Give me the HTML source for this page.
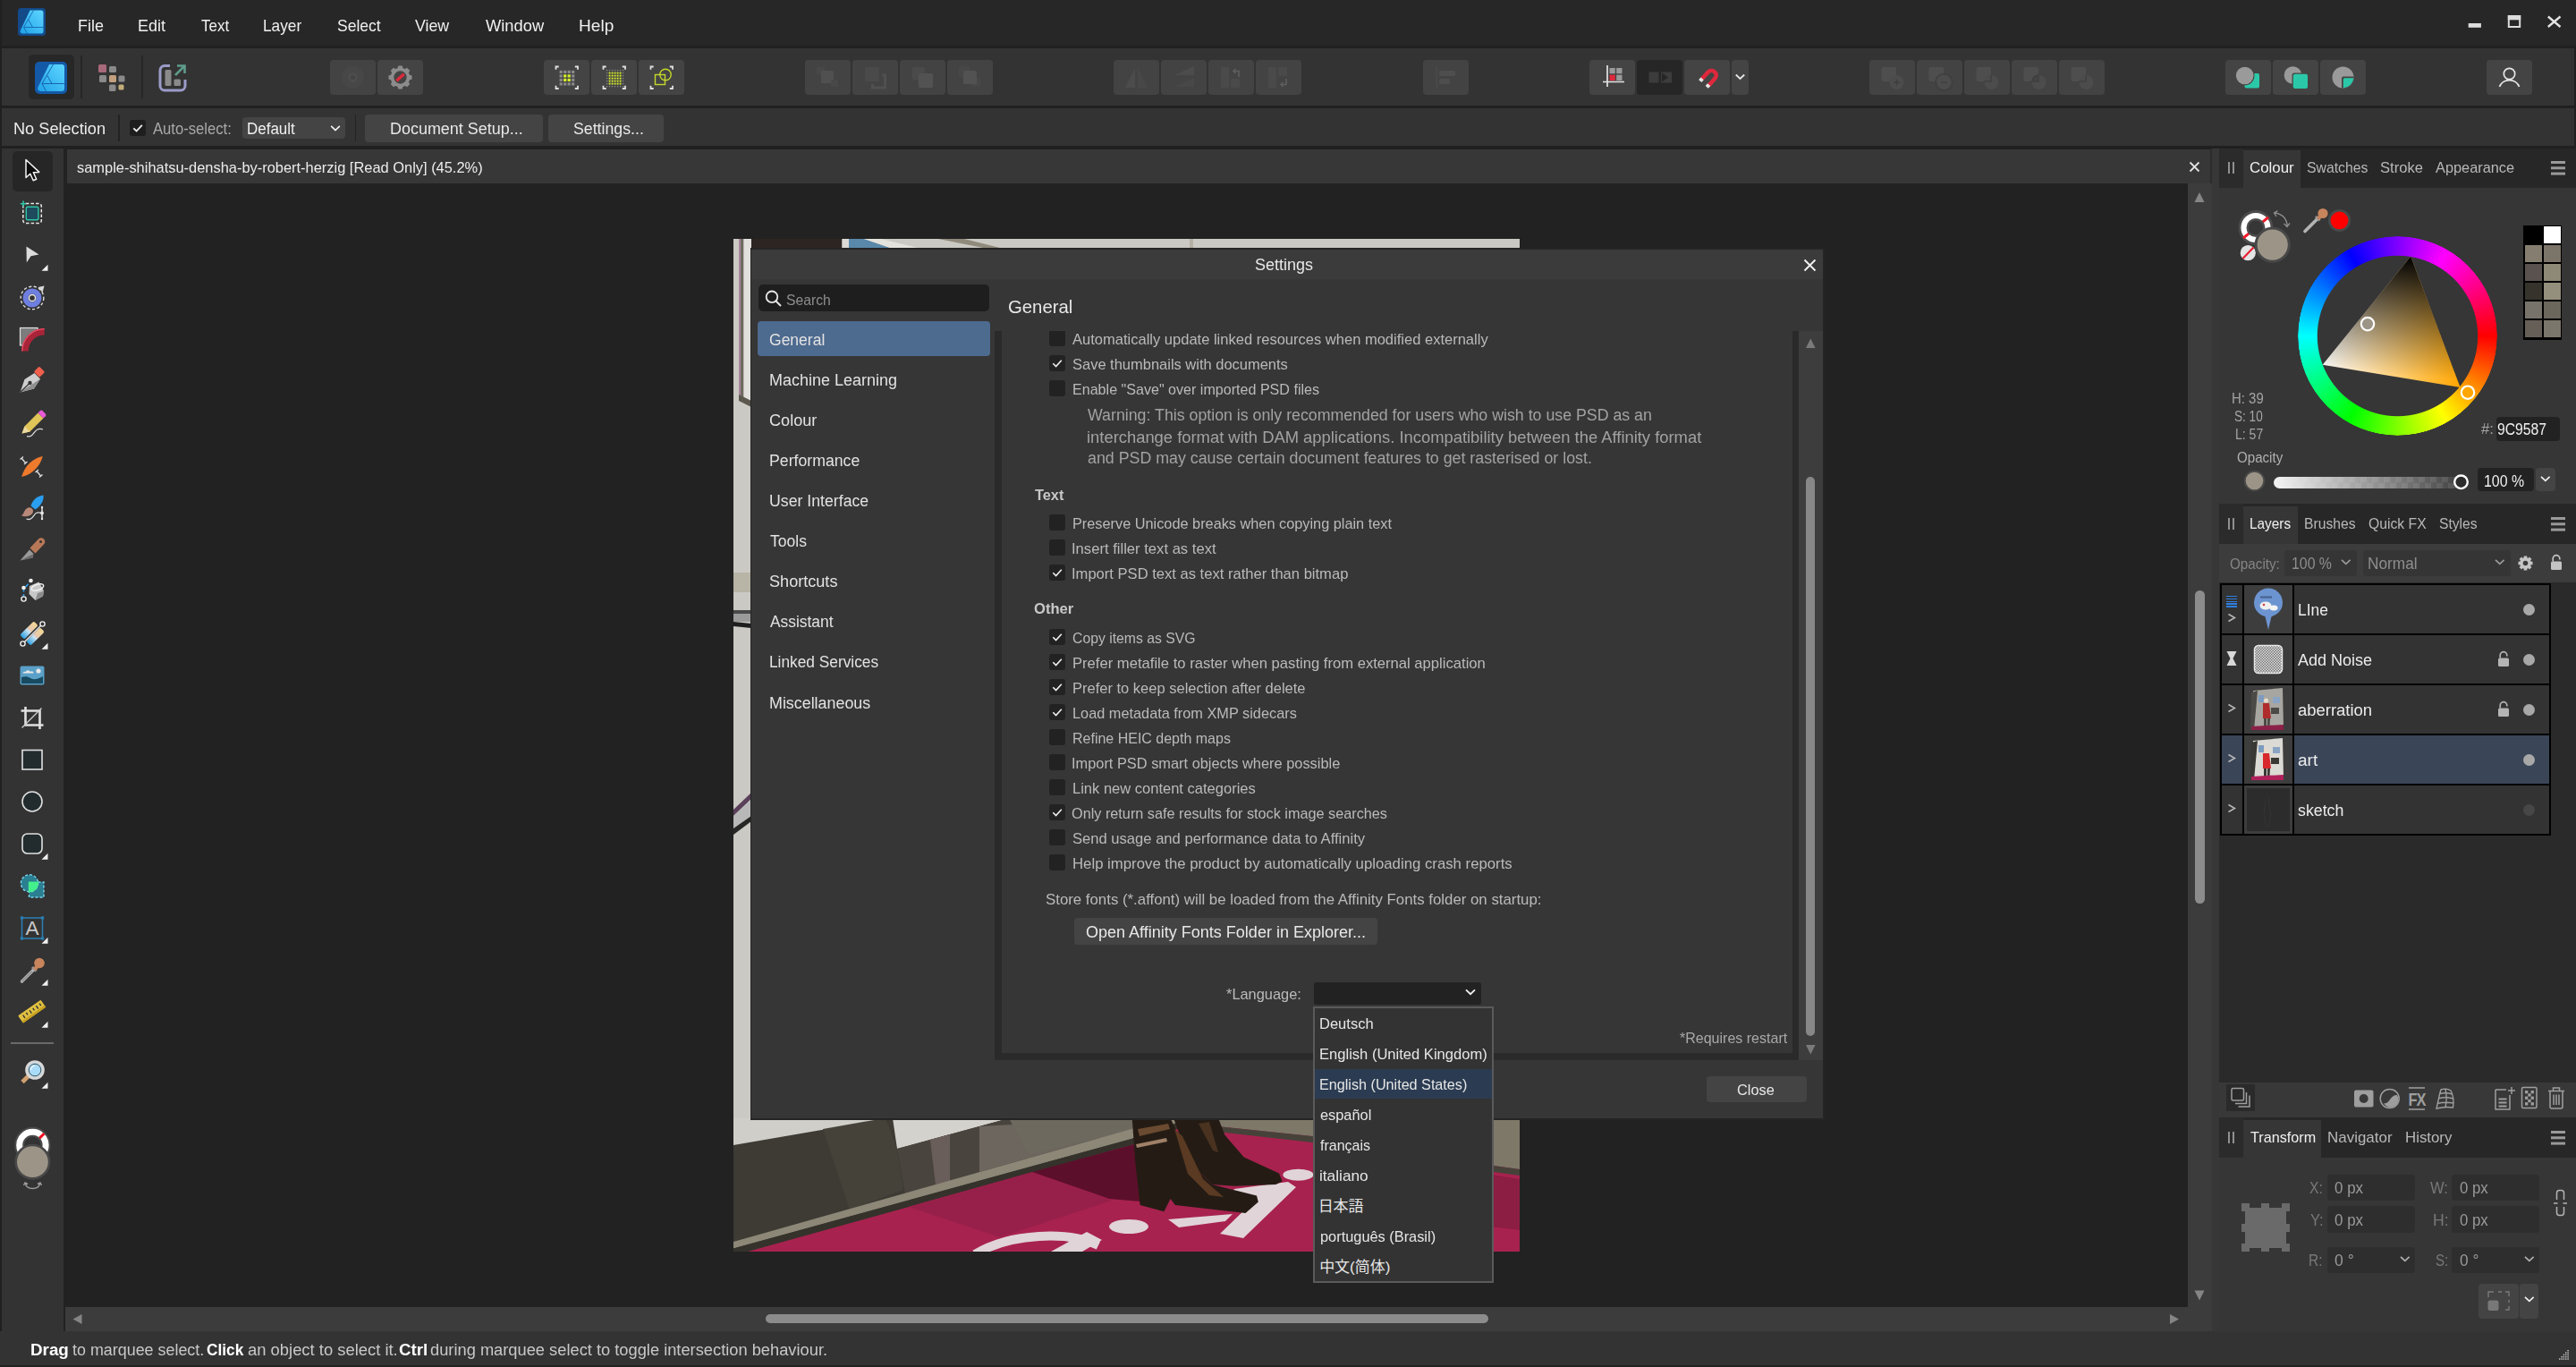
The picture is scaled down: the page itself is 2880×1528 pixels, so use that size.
<!DOCTYPE html>
<html lang="en"><head><meta charset="utf-8"><title>Affinity Designer - Settings</title>
<style>
html,body{margin:0;padding:0;background:#222;}
body{width:2880px;height:1528px;position:relative;overflow:hidden;font-family:"Liberation Sans","Noto Sans CJK JP",sans-serif;}
div,svg,span.t{position:absolute;}
span.t{white-space:nowrap;line-height:1;transform-origin:0 0;}
svg{overflow:visible;}
</style></head><body>
<div style="left:0px;top:0px;width:2880px;height:1528px;background:#202020;"></div>
<div style="left:2px;top:0px;width:2878px;height:51px;background:#272727;"></div>
<div style="left:2px;top:53.5px;width:2878px;height:64.5px;background:#333333;"></div>
<div style="left:2px;top:121px;width:2878px;height:41.5px;background:#333333;"></div>
<div style="left:2px;top:165.5px;width:69px;height:1323.5px;background:#333333;"></div>
<div style="left:73px;top:205px;width:2373px;height:1256px;background:#222222;"></div>
<div style="left:71px;top:165.5px;width:4px;height:1323.5px;background:#222222;"></div>
<div style="left:75px;top:167px;width:2396px;height:38px;background:#373737;"></div>
<div style="left:2446px;top:205px;width:27px;height:1283px;background:#3c3c3c;"></div>
<div style="left:73px;top:1461px;width:2373px;height:27px;background:#3c3c3c;"></div>
<div style="left:2471px;top:165.5px;width:2.4px;height:39.5px;background:#2c2c2c;"></div>
<div style="left:2473.4px;top:165.5px;width:7.6px;height:1322.5px;background:#373737;"></div>
<div style="left:0px;top:1488px;width:2880px;height:40px;background:#333333;"></div>
<div style="left:2878px;top:51px;width:2px;height:1437px;background:#202020;"></div>
<svg style="left:20px;top:9px;" width="31" height="31" viewBox="0 0 31 31"><defs><linearGradient id="lg1" x1="0" y1="1" x2="1" y2="0"><stop offset="0" stop-color="#1fa2e8"/><stop offset="1" stop-color="#5fd6ff"/></linearGradient></defs>
<rect x="0" y="0" width="31" height="31" rx="3.5" fill="#134a8a"/>
<path d="M13.5 2.5 H26 a2.5 2.5 0 0 1 2.5 2.5 V26 a2.5 2.5 0 0 1 -2.5 2.5 H5 a2.5 2.5 0 0 1 -2.2 -3.6 Z" fill="url(#lg1)"/>
<path d="M17.5 2.5 L6.5 21.5 H28.5 M11.5 12.8 L16.5 21.5 M6.5 21.5 L10.5 28.5" stroke="#1565b0" stroke-width="0.9" fill="none"/></svg>
<span class="t" id="t0" style="left:86.70px;top:19.42px;font-size:19px;color:#f0f0f0;transform:scaleX(0.9457);">File</span>
<span class="t" id="t1" style="left:153.58px;top:19.42px;font-size:19px;color:#f0f0f0;transform:scaleX(0.9449);">Edit</span>
<span class="t" id="t2" style="left:224.92px;top:19.42px;font-size:19px;color:#f0f0f0;transform:scaleX(0.8939);">Text</span>
<span class="t" id="t3" style="left:294.22px;top:19.42px;font-size:19px;color:#f0f0f0;transform:scaleX(0.9086);">Layer</span>
<span class="t" id="t4" style="left:376.52px;top:19.42px;font-size:19px;color:#f0f0f0;transform:scaleX(0.9223);">Select</span>
<span class="t" id="t5" style="left:464.46px;top:19.42px;font-size:19px;color:#f0f0f0;transform:scaleX(0.9338);">View</span>
<span class="t" id="t6" style="left:542.56px;top:19.42px;font-size:19px;color:#f0f0f0;transform:scaleX(0.9640);">Window</span>
<span class="t" id="t7" style="left:647.43px;top:19.42px;font-size:19px;color:#f0f0f0;transform:scaleX(1.0048);">Help</span>
<svg style="left:2758px;top:16px;" width="120" height="20" viewBox="0 0 120 20"><rect x="1.700" y="10" width="14.200" height="4.800" fill="#dcdcdc"/>
<rect x="46.800" y="2" width="12.400" height="12" fill="none" stroke="#dcdcdc" stroke-width="2"/><rect x="45.800" y="1" width="14.400" height="5.300" fill="#dcdcdc"/>
<path d="M90.800 2.500 L104.500 14 M104.500 2.500 L90.800 14" stroke="#e4e4e4" stroke-width="2.300"/></svg>
<div style="left:32px;top:61px;width:51px;height:50px;background:#272727;border-radius:5px;"></div>
<svg style="left:39px;top:69px;" width="36" height="36" viewBox="0 0 36 36"><rect x="0" y="0" width="36" height="36" rx="5" fill="#1459a8"/>
<path d="M16 3 H30 a3 3 0 0 1 3 3 V30 a3 3 0 0 1 -3 3 H6 a3 3 0 0 1 -2.6 -4.4 Z" fill="url(#lg1)"/>
<path d="M20.5 3 L8 24.5 H33 M13.5 15 L19 24.5 M8 24.5 L12.5 33" stroke="#1565b0" stroke-width="1" fill="none"/></svg>
<div style="left:90px;top:62px;width:1.5px;height:48px;background:#262626;"></div>
<div style="left:158px;top:62px;width:1.5px;height:48px;background:#262626;"></div>
<svg style="left:109px;top:71px;" width="32" height="32" viewBox="0 0 32 32"><rect x="1" y="1" width="9" height="9" rx="1.5" fill="#a8697a"/><rect x="13" y="3" width="8" height="7" rx="1.5" fill="#8a8a8a"/>
<rect x="2" y="13" width="8" height="8" rx="1.5" fill="#8a8a8a"/><rect x="13" y="13" width="8" height="8" rx="1.5" fill="#c29f7e"/><rect x="23.5" y="13.5" width="7" height="7" rx="1.5" fill="#8a8a8a"/>
<rect x="13" y="23.5" width="7.5" height="7.5" rx="1.5" fill="#8a8a8a"/><rect x="23.5" y="23.5" width="6" height="6" rx="1.5" fill="#c2ad7a"/></svg>
<svg style="left:177px;top:71px;" width="32" height="32" viewBox="0 0 32 32"><path d="M13 2.5 H7 a5 5 0 0 0 -5 5 V25 a5 5 0 0 0 5 5 H25 a5 5 0 0 0 5 -5 V18" fill="none" stroke="#9b9bc8" stroke-width="3"/>
<rect x="7.5" y="7" width="7" height="18" rx="1.5" fill="#8a8a8a"/><rect x="17.5" y="17.5" width="7.5" height="7.500" rx="1.5" fill="#8a8a8a"/>
<path d="M19 13 L29 3 M21 2.500 H29.5 V11" fill="none" stroke="#5f9b8a" stroke-width="2.6"/></svg>
<div style="left:369px;top:67px;width:51px;height:39px;background:#434343;border-radius:4px;"></div>
<div style="left:422px;top:67px;width:51px;height:39px;background:#444444;border-radius:4px;"></div>
<div style="left:608px;top:67px;width:51px;height:39px;background:#444444;border-radius:4px;"></div>
<div style="left:661px;top:67px;width:51px;height:39px;background:#444444;border-radius:4px;"></div>
<div style="left:714px;top:67px;width:51px;height:39px;background:#444444;border-radius:4px;"></div>
<div style="left:900px;top:67px;width:51px;height:39px;background:#434343;border-radius:4px;"></div>
<div style="left:953px;top:67px;width:51px;height:39px;background:#434343;border-radius:4px;"></div>
<div style="left:1006px;top:67px;width:51px;height:39px;background:#434343;border-radius:4px;"></div>
<div style="left:1059px;top:67px;width:51px;height:39px;background:#434343;border-radius:4px;"></div>
<div style="left:1245px;top:67px;width:51px;height:39px;background:#434343;border-radius:4px;"></div>
<div style="left:1298px;top:67px;width:51px;height:39px;background:#434343;border-radius:4px;"></div>
<div style="left:1351px;top:67px;width:51px;height:39px;background:#434343;border-radius:4px;"></div>
<div style="left:1404px;top:67px;width:51px;height:39px;background:#434343;border-radius:4px;"></div>
<div style="left:1591px;top:67px;width:51px;height:39px;background:#434343;border-radius:4px;"></div>
<div style="left:1777px;top:67px;width:51px;height:39px;background:#444444;border-radius:4px;"></div>
<div style="left:1830px;top:67px;width:51px;height:39px;background:#262626;border-radius:4px;"></div>
<div style="left:1883px;top:67px;width:51px;height:39px;background:#444444;border-radius:4px;"></div>
<div style="left:1936px;top:67px;width:19px;height:39px;background:#444444;border-radius:4px;"></div>
<div style="left:2090px;top:67px;width:51px;height:39px;background:#434343;border-radius:4px;"></div>
<div style="left:2143px;top:67px;width:51px;height:39px;background:#434343;border-radius:4px;"></div>
<div style="left:2196px;top:67px;width:51px;height:39px;background:#434343;border-radius:4px;"></div>
<div style="left:2249px;top:67px;width:51px;height:39px;background:#434343;border-radius:4px;"></div>
<div style="left:2302px;top:67px;width:51px;height:39px;background:#434343;border-radius:4px;"></div>
<div style="left:2488px;top:67px;width:51px;height:39px;background:#444444;border-radius:4px;"></div>
<div style="left:2541px;top:67px;width:51px;height:39px;background:#444444;border-radius:4px;"></div>
<div style="left:2594px;top:67px;width:51px;height:39px;background:#444444;border-radius:4px;"></div>
<div style="left:2780px;top:67px;width:51px;height:39px;background:#444444;border-radius:4px;"></div>
<svg style="left:369px;top:67px;" width="51" height="39" viewBox="0 0 51 39"><circle cx="25.5" cy="19.5" r="9" fill="none" stroke="#474747" stroke-width="7"/><circle cx="25.5" cy="19.5" r="4" fill="none" stroke="#4d4d4d" stroke-width="3"/></svg>
<svg style="left:422px;top:67px;" width="51" height="39" viewBox="0 0 51 39"><rect x="22.9" y="6.5" width="5.2" height="4.2" rx="1" fill="#8c8c8c" transform="rotate(0 25.5 19.5)"/><rect x="22.9" y="6.5" width="5.2" height="4.2" rx="1" fill="#8c8c8c" transform="rotate(45 25.5 19.5)"/><rect x="22.9" y="6.5" width="5.2" height="4.2" rx="1" fill="#8c8c8c" transform="rotate(90 25.5 19.5)"/><rect x="22.9" y="6.5" width="5.2" height="4.2" rx="1" fill="#8c8c8c" transform="rotate(135 25.5 19.5)"/><rect x="22.9" y="6.5" width="5.2" height="4.2" rx="1" fill="#8c8c8c" transform="rotate(180 25.5 19.5)"/><rect x="22.9" y="6.5" width="5.2" height="4.2" rx="1" fill="#8c8c8c" transform="rotate(225 25.5 19.5)"/><rect x="22.9" y="6.5" width="5.2" height="4.2" rx="1" fill="#8c8c8c" transform="rotate(270 25.5 19.5)"/><rect x="22.9" y="6.5" width="5.2" height="4.2" rx="1" fill="#8c8c8c" transform="rotate(315 25.5 19.5)"/><circle cx="25.5" cy="19.5" r="9" fill="none" stroke="#8c8c8c" stroke-width="3.6"/><path d="M21.3 23.200 L29.700 15.800" stroke="#e0283c" stroke-width="3.4"/></svg>
<svg style="left:608px;top:67px;" width="51" height="39" viewBox="0 0 51 39"><path d="M13.5 10.7 V7.5 H16.7 M34.8 7.5 H38 V10.7 M38 28.8 V32 H34.8 M16.7 32 H13.5 V28.8" fill="none" stroke="#e0e0e0" stroke-width="1.8"/><rect x="17.6" y="11.8" width="3.2" height="3.2" fill="#8a8a8a"/><rect x="17.6" y="16.3" width="3.2" height="3.2" fill="#8a8a8a"/><rect x="17.6" y="20.8" width="3.2" height="3.2" fill="#8a8a8a"/><rect x="17.6" y="25.3" width="3.2" height="3.2" fill="#8a8a8a"/><rect x="22.1" y="11.8" width="3.2" height="3.2" fill="#8a8a8a"/><rect x="22.1" y="16.3" width="3.2" height="3.2" fill="#d8f02a"/><rect x="22.1" y="20.8" width="3.2" height="3.2" fill="#d8f02a"/><rect x="22.1" y="25.3" width="3.2" height="3.2" fill="#8a8a8a"/><rect x="26.6" y="11.8" width="3.2" height="3.2" fill="#8a8a8a"/><rect x="26.6" y="16.3" width="3.2" height="3.2" fill="#d8f02a"/><rect x="26.6" y="20.8" width="3.2" height="3.2" fill="#d8f02a"/><rect x="26.6" y="25.3" width="3.2" height="3.2" fill="#8a8a8a"/><rect x="31.1" y="11.8" width="3.2" height="3.2" fill="#8a8a8a"/><rect x="31.1" y="16.3" width="3.2" height="3.2" fill="#8a8a8a"/><rect x="31.1" y="20.8" width="3.2" height="3.2" fill="#8a8a8a"/><rect x="31.1" y="25.3" width="3.2" height="3.2" fill="#8a8a8a"/></svg>
<svg style="left:661px;top:67px;" width="51" height="39" viewBox="0 0 51 39"><path d="M13.5 10.7 V7.5 H16.7 M34.8 7.5 H38 V10.7 M38 28.8 V32 H34.8 M16.7 32 H13.5 V28.8" fill="none" stroke="#e0e0e0" stroke-width="1.8"/><rect x="16.95" y="10.95" width="1.3" height="1.3" fill="#8a8a8a"/><rect x="16.95" y="13.95" width="1.3" height="1.3" fill="#8a8a8a"/><rect x="16.95" y="16.95" width="1.3" height="1.3" fill="#8a8a8a"/><rect x="16.95" y="19.95" width="1.3" height="1.3" fill="#8a8a8a"/><rect x="16.95" y="22.95" width="1.3" height="1.3" fill="#8a8a8a"/><rect x="16.95" y="25.95" width="1.3" height="1.3" fill="#8a8a8a"/><rect x="16.95" y="28.95" width="1.3" height="1.3" fill="#8a8a8a"/><rect x="19.95" y="10.95" width="1.3" height="1.3" fill="#8a8a8a"/><rect x="19.65" y="13.65" width="1.9" height="1.9" fill="#d8f02a"/><rect x="19.65" y="16.65" width="1.9" height="1.9" fill="#d8f02a"/><rect x="19.65" y="19.65" width="1.9" height="1.9" fill="#d8f02a"/><rect x="19.65" y="22.65" width="1.9" height="1.9" fill="#d8f02a"/><rect x="19.65" y="25.65" width="1.9" height="1.9" fill="#d8f02a"/><rect x="19.95" y="28.95" width="1.3" height="1.3" fill="#8a8a8a"/><rect x="22.95" y="10.95" width="1.3" height="1.3" fill="#8a8a8a"/><rect x="22.65" y="13.65" width="1.9" height="1.9" fill="#d8f02a"/><rect x="22.65" y="16.65" width="1.9" height="1.9" fill="#d8f02a"/><rect x="22.65" y="19.65" width="1.9" height="1.9" fill="#d8f02a"/><rect x="22.65" y="22.65" width="1.9" height="1.9" fill="#d8f02a"/><rect x="22.65" y="25.65" width="1.9" height="1.9" fill="#d8f02a"/><rect x="22.95" y="28.95" width="1.3" height="1.3" fill="#8a8a8a"/><rect x="25.95" y="10.95" width="1.3" height="1.3" fill="#8a8a8a"/><rect x="25.65" y="13.65" width="1.9" height="1.9" fill="#d8f02a"/><rect x="25.65" y="16.65" width="1.9" height="1.9" fill="#d8f02a"/><rect x="25.65" y="19.65" width="1.9" height="1.9" fill="#d8f02a"/><rect x="25.65" y="22.65" width="1.9" height="1.9" fill="#d8f02a"/><rect x="25.65" y="25.65" width="1.9" height="1.9" fill="#d8f02a"/><rect x="25.95" y="28.95" width="1.3" height="1.3" fill="#8a8a8a"/><rect x="28.95" y="10.95" width="1.3" height="1.3" fill="#8a8a8a"/><rect x="28.65" y="13.65" width="1.9" height="1.9" fill="#d8f02a"/><rect x="28.65" y="16.65" width="1.9" height="1.9" fill="#d8f02a"/><rect x="28.65" y="19.65" width="1.9" height="1.9" fill="#d8f02a"/><rect x="28.65" y="22.65" width="1.9" height="1.9" fill="#d8f02a"/><rect x="28.65" y="25.65" width="1.9" height="1.9" fill="#d8f02a"/><rect x="28.95" y="28.95" width="1.3" height="1.3" fill="#8a8a8a"/><rect x="31.95" y="10.95" width="1.3" height="1.3" fill="#8a8a8a"/><rect x="31.65" y="13.65" width="1.9" height="1.9" fill="#d8f02a"/><rect x="31.65" y="16.65" width="1.9" height="1.9" fill="#d8f02a"/><rect x="31.65" y="19.65" width="1.9" height="1.9" fill="#d8f02a"/><rect x="31.65" y="22.65" width="1.9" height="1.9" fill="#d8f02a"/><rect x="31.65" y="25.65" width="1.9" height="1.9" fill="#d8f02a"/><rect x="31.95" y="28.95" width="1.3" height="1.3" fill="#8a8a8a"/><rect x="34.95" y="10.95" width="1.3" height="1.3" fill="#8a8a8a"/><rect x="34.95" y="13.95" width="1.3" height="1.3" fill="#8a8a8a"/><rect x="34.95" y="16.95" width="1.3" height="1.3" fill="#8a8a8a"/><rect x="34.95" y="19.95" width="1.3" height="1.3" fill="#8a8a8a"/><rect x="34.95" y="22.95" width="1.3" height="1.3" fill="#8a8a8a"/><rect x="34.95" y="25.95" width="1.3" height="1.3" fill="#8a8a8a"/><rect x="34.95" y="28.95" width="1.3" height="1.3" fill="#8a8a8a"/></svg>
<svg style="left:714px;top:67px;" width="51" height="39" viewBox="0 0 51 39"><path d="M13.5 10.7 V7.5 H16.7 M34.8 7.5 H38 V10.7 M38 28.8 V32 H34.8 M16.7 32 H13.5 V28.8" fill="none" stroke="#e0e0e0" stroke-width="1.8"/><rect x="18.5" y="16.5" width="11" height="11" fill="none" stroke="#c4d82a" stroke-width="1.4"/><circle cx="30" cy="16.5" r="6.2" fill="none" stroke="#c4d82a" stroke-width="1.4"/></svg>
<svg style="left:900px;top:67px;" width="51" height="39" viewBox="0 0 51 39"><rect x="13" y="8" width="9" height="8" rx="1.5" fill="#484848"/><rect x="18" y="12" width="14" height="14" rx="1.5" fill="#505050"/><rect x="29" y="22" width="8" height="8" rx="1.5" fill="#484848"/></svg>
<svg style="left:953px;top:67px;" width="51" height="39" viewBox="0 0 51 39"><rect x="14" y="8" width="16" height="16" rx="1.5" fill="#4a4a4a"/><path d="M33 17 h3.500 v14 h-14 v-4" fill="none" stroke="#505050" stroke-width="3"/></svg>
<svg style="left:1006px;top:67px;" width="51" height="39" viewBox="0 0 51 39"><rect x="14" y="8" width="14" height="14" rx="1.5" fill="#4a4a4a"/><rect x="21" y="15" width="16" height="16" rx="1.5" fill="#525252"/></svg>
<svg style="left:1059px;top:67px;" width="51" height="39" viewBox="0 0 51 39"><rect x="13" y="7" width="12" height="12" rx="1.5" fill="#474747"/><rect x="27" y="20" width="10" height="10" rx="1.500" fill="#474747"/><rect x="18" y="12" width="15" height="15" rx="1.5" fill="#525252"/></svg>
<svg style="left:1245px;top:67px;" width="51" height="39" viewBox="0 0 51 39"><path d="M24 9 V31 H13 Z" fill="#4c4c4c"/><path d="M27 9 V31 H38 Z" fill="#484848"/></svg>
<svg style="left:1298px;top:67px;" width="51" height="39" viewBox="0 0 51 39"><path d="M37 7 V17 H15 Z" fill="#4c4c4c"/><path d="M37 20 V30 H15 Z" fill="#484848"/></svg>
<svg style="left:1351px;top:67px;" width="51" height="39" viewBox="0 0 51 39"><rect x="14" y="8" width="9" height="23" rx="1" fill="#4a4a4a"/><rect x="25" y="21" width="10" height="10" rx="1" fill="#4a4a4a"/><path d="M34 19 V12.500 H28 M30.500 10 L28 12.500 L30.500 15" fill="none" stroke="#5e5e5e" stroke-width="1.6"/></svg>
<svg style="left:1404px;top:67px;" width="51" height="39" viewBox="0 0 51 39"><rect x="14" y="8" width="9" height="23" rx="1" fill="#4a4a4a"/><rect x="25" y="8" width="10" height="10" rx="1" fill="#4a4a4a"/><path d="M34 21 V27.500 H28 M30.500 25 L28 27.500 L30.500 30" fill="none" stroke="#5e5e5e" stroke-width="1.6"/></svg>
<svg style="left:1591px;top:67px;" width="51" height="39" viewBox="0 0 51 39"><rect x="14.500" y="7" width="1.5" height="25" fill="#4a4a4a"/><rect x="18" y="12" width="18" height="6" rx="1.5" fill="#4e4e4e"/><rect x="18" y="21" width="12" height="6" rx="1.5" fill="#4e4e4e"/></svg>
<svg style="left:1777px;top:67px;" width="51" height="39" viewBox="0 0 51 39"><path d="M20 6 V30 M15 24.500 H39" stroke="#e4e4e4" stroke-width="1.700" fill="none"/><rect x="22.5" y="9" width="6.3" height="6.3" fill="#9a9a9a"/><rect x="30.2" y="9" width="6.3" height="6.3" fill="#9a9a9a"/><rect x="22.5" y="16.7" width="6.3" height="6.3" fill="#e0283c"/><rect x="30.2" y="16.700" width="6.3" height="6.3" fill="#9a9a9a"/></svg>
<svg style="left:1830px;top:67px;" width="51" height="39" viewBox="0 0 51 39"><rect x="13.500" y="13.500" width="11" height="12" fill="#3c3c3c"/><rect x="27" y="13.5" width="12" height="12" fill="#3c3c3c"/><path d="M28 14.500 L35 19.500 L28 24.500 Z" fill="#262626"/></svg>
<svg style="left:1883px;top:67px;" width="51" height="39" viewBox="0 0 51 39"><path d="M19.500 21.500 L26.500 13.800 a5.200 5.200 0 0 1 8 6.800 L27.500 28.500" fill="none" stroke="#e0283c" stroke-width="4.600"/><path d="M17.300 20.800 L20.600 23.600" stroke="#e6e6e6" stroke-width="3.600"/><path d="M24.800 27.600 L28.100 30.400" stroke="#e6e6e6" stroke-width="3.600"/></svg>
<svg style="left:1936px;top:67px;" width="19" height="39" viewBox="0 0 19 39"><path d="M4.800 16.500 L9.500 21 L14.200 16.500" fill="none" stroke="#e6e6e6" stroke-width="1.8"/></svg>
<svg style="left:2090px;top:67px;" width="51" height="39" viewBox="0 0 51 39"><rect x="13.500" y="8" width="16.500" height="16" rx="2" fill="#4e4e4e"/><circle cx="30.500" cy="25" r="8" fill="#4c4c4c"/><path d="M30.500 21.500 v7 M27 25 h7" stroke="#3e3e3e" stroke-width="1.400"/></svg>
<svg style="left:2143px;top:67px;" width="51" height="39" viewBox="0 0 51 39"><rect x="13.500" y="8" width="16.500" height="16" rx="2" fill="#4e4e4e"/><circle cx="30.500" cy="25" r="8" fill="#4c4c4c"/><circle cx="30.500" cy="25" r="9.500" fill="none" stroke="#3f3f3f" stroke-width="1.500"/><path d="M27 25 h7" stroke="#3e3e3e" stroke-width="1.4"/></svg>
<svg style="left:2196px;top:67px;" width="51" height="39" viewBox="0 0 51 39"><rect x="13.500" y="8" width="16.500" height="16" rx="2" fill="#4e4e4e"/><circle cx="30.500" cy="25" r="8" fill="#4c4c4c"/><path d="M30 17 V24 H22.500" fill="none" stroke="#3f3f3f" stroke-width="1.400"/></svg>
<svg style="left:2249px;top:67px;" width="51" height="39" viewBox="0 0 51 39"><rect x="13.500" y="8" width="16.500" height="16" rx="2" fill="#4e4e4e"/><circle cx="30.500" cy="25" r="8" fill="#4c4c4c"/><path d="M30 17 V24 H22.500 A8 8 0 0 1 30 17" fill="#444" stroke="#3f3f3f" stroke-width="1.400"/></svg>
<svg style="left:2302px;top:67px;" width="51" height="39" viewBox="0 0 51 39"><rect x="13.500" y="8" width="16.500" height="16" rx="2" fill="#4e4e4e"/><circle cx="30.500" cy="25" r="8" fill="#4c4c4c"/><path d="M30 17 V24 H22.500" fill="none" stroke="#3f3f3f" stroke-width="1.400"/></svg>
<svg style="left:2488px;top:67px;" width="51" height="39" viewBox="0 0 51 39"><rect x="21.500" y="15" width="16.500" height="16.500" rx="2" fill="#2ac8a8"/><circle cx="21.700" cy="17.500" r="10.800" fill="#444"/><circle cx="21.700" cy="17.500" r="9.800" fill="#9a9a9a"/></svg>
<svg style="left:2541px;top:67px;" width="51" height="39" viewBox="0 0 51 39"><circle cx="22.500" cy="17" r="9.800" fill="#9a9a9a"/><rect x="21.500" y="14.500" width="18" height="18" rx="2.500" fill="#444"/><rect x="22.800" y="15.800" width="16.200" height="16.200" rx="2" fill="#2ac8a8"/></svg>
<svg style="left:2594px;top:67px;" width="51" height="39" viewBox="0 0 51 39"><circle cx="25.500" cy="19.500" r="12" fill="#9a9a9a"/><path d="M24 31.500 V20.500 a2 2 0 0 1 2 -2 H37.500 V19.500 a12 12 0 0 1 -12 12 Z" fill="#444"/><path d="M25.800 31.400 V21.800 a1.500 1.500 0 0 1 1.500 -1.500 H37.400 a12 12 0 0 1 -11.600 11.100 Z" fill="#2ac8a8"/></svg>
<svg style="left:2780px;top:67px;" width="51" height="39" viewBox="0 0 51 39"><circle cx="25.500" cy="15.500" r="6.200" fill="none" stroke="#e6e6e6" stroke-width="1.700"/><path d="M14.500 30 a11.500 10.500 0 0 1 22 0" fill="none" stroke="#e6e6e6" stroke-width="1.700"/></svg>
<span class="t" id="t8" style="left:14.55px;top:134.76px;font-size:18px;color:#ececec;transform:scaleX(1.0091);">No Selection</span>
<div style="left:132px;top:128px;width:1.5px;height:30px;background:#222;"></div>
<div style="left:145px;top:134px;width:18px;height:18px;background:#1e1e1e;border-radius:3px;"></div>
<svg style="left:145px;top:134px;" width="18" height="18" viewBox="0 0 18 18"><path d="M4.300 9.300 L7.600 12.500 L13.800 5.800" fill="none" stroke="#f0f0f0" stroke-width="1.800"/></svg>
<span class="t" id="t9" style="left:171.16px;top:134.76px;font-size:18px;color:#a8a8a8;transform:scaleX(0.9239);">Auto-select:</span>
<div style="left:271px;top:130.5px;width:115px;height:24.5px;background:#444444;border-radius:4px;"></div>
<span class="t" id="t10" style="left:276.42px;top:134.76px;font-size:18px;color:#f0f0f0;transform:scaleX(0.9420);">Default</span>
<svg style="left:368px;top:138px;" width="14" height="12" viewBox="0 0 14 12"><path d="M2.200 2.800 L7 7.500 L11.800 2.800" fill="none" stroke="#f0f0f0" stroke-width="1.700"/></svg>
<div style="left:396.5px;top:128px;width:1.5px;height:30px;background:#222;"></div>
<div style="left:408px;top:128px;width:199px;height:30.5px;background:#444444;border-radius:4px;"></div>
<span class="t" id="t11" style="left:436.20px;top:134.76px;font-size:18px;color:#e8e8e8;transform:scaleX(0.9970);">Document Setup...</span>
<div style="left:613px;top:128px;width:128.5px;height:30.5px;background:#444444;border-radius:4px;"></div>
<span class="t" id="t12" style="left:640.94px;top:134.76px;font-size:18px;color:#e8e8e8;transform:scaleX(0.9848);">Settings...</span>
<span class="t" id="t13" style="left:86.19px;top:178.91px;font-size:17px;color:#ececec;transform:scaleX(0.9660);">sample-shihatsu-densha-by-robert-herzig [Read Only] (45.2%)</span>
<svg style="left:2446px;top:179px;" width="16" height="16" viewBox="0 0 16 16"><path d="M2.500 2.500 L12.500 12.500 M12.500 2.500 L2.500 12.500" stroke="#e0e0e0" stroke-width="1.800"/></svg>
<svg style="left:2446px;top:205px;" width="27" height="30" viewBox="0 0 27 30"><path d="M7.500 21 L13 10 L18.500 21 Z" fill="#858585"/></svg>
<svg style="left:2446px;top:1433px;" width="27" height="30" viewBox="0 0 27 30"><path d="M7.500 9.500 L13 20.500 L18.500 9.500 Z" fill="#858585"/></svg>
<div style="left:2454px;top:660px;width:10.5px;height:349.5px;background:#8c8c8c;border-radius:5.2px;"></div>
<svg style="left:76px;top:1461px;" width="24" height="27" viewBox="0 0 24 27"><path d="M15.500 8 L5.500 13.500 L15.500 19 Z" fill="#858585"/></svg>
<svg style="left:2420px;top:1461px;" width="24" height="27" viewBox="0 0 24 27"><path d="M6 8 L16 13.500 L6 19 Z" fill="#858585"/></svg>
<div style="left:856px;top:1469.3px;width:807.5px;height:10.2px;background:#8c8c8c;border-radius:5.1px;"></div>
<span class="t" id="t14" style="left:34.25px;top:1499.56px;font-size:18px;color:#ffffff;font-weight:bold;transform:scaleX(1.0448);">Drag</span>
<span class="t" id="t15" style="left:80.76px;top:1499.56px;font-size:18px;color:#c8c8c8;transform:scaleX(0.9943);">to marquee select.</span>
<span class="t" id="t16" style="left:230.99px;top:1499.56px;font-size:18px;color:#ffffff;font-weight:bold;transform:scaleX(0.9591);">Click</span>
<span class="t" id="t17" style="left:276.70px;top:1499.56px;font-size:18px;color:#c8c8c8;transform:scaleX(1.0222);">an object to select it.</span>
<span class="t" id="t18" style="left:445.83px;top:1499.56px;font-size:18px;color:#ffffff;font-weight:bold;transform:scaleX(1.0392);">Ctrl</span>
<span class="t" id="t19" style="left:481.35px;top:1499.56px;font-size:18px;color:#c8c8c8;transform:scaleX(1.0155);">during marquee select to toggle intersection behaviour.</span>
<svg style="left:2861px;top:1509px;" width="14" height="14" viewBox="0 0 14 14"><rect x="0" y="9.4" width="1.400" height="1.400" fill="#cfcfcf"/><rect x="2.35" y="7.05" width="1.400" height="1.400" fill="#cfcfcf"/><rect x="2.35" y="9.4" width="1.400" height="1.400" fill="#cfcfcf"/><rect x="4.7" y="4.7" width="1.400" height="1.400" fill="#cfcfcf"/><rect x="4.7" y="7.05" width="1.400" height="1.400" fill="#cfcfcf"/><rect x="4.7" y="9.4" width="1.400" height="1.400" fill="#cfcfcf"/><rect x="7.05" y="2.35" width="1.400" height="1.400" fill="#cfcfcf"/><rect x="7.05" y="4.7" width="1.400" height="1.400" fill="#cfcfcf"/><rect x="7.05" y="7.05" width="1.400" height="1.400" fill="#cfcfcf"/><rect x="7.05" y="9.4" width="1.400" height="1.400" fill="#cfcfcf"/><rect x="9.4" y="0" width="1.400" height="1.400" fill="#cfcfcf"/><rect x="9.4" y="2.35" width="1.400" height="1.400" fill="#cfcfcf"/><rect x="9.4" y="4.7" width="1.400" height="1.400" fill="#cfcfcf"/><rect x="9.4" y="7.05" width="1.400" height="1.400" fill="#cfcfcf"/><rect x="9.4" y="9.4" width="1.400" height="1.400" fill="#cfcfcf"/></svg>
<div style="left:0px;top:1526px;width:2880px;height:2px;background:#222222;"></div>
<div style="left:14px;top:169px;width:45px;height:45px;background:#262626;border-radius:5px;"></div>
<svg style="left:11.5px;top:168.5px;" width="48" height="44" viewBox="0 0 48 44"><path d="M17 9.500 L17 29.500 L21.800 25.200 L25.200 32.800 L28.700 31.200 L25.300 23.800 L31.800 23.400 Z" fill="#0c0c0c" stroke="#f4f4f4" stroke-width="1.500" stroke-linejoin="round"/></svg>
<svg style="left:11.5px;top:215.5px;" width="48" height="44" viewBox="0 0 48 44"><rect x="13.800" y="11.500" width="20.500" height="22" rx="3" fill="none" stroke="#e8e8e8" stroke-width="1.500" stroke-dasharray="3.600 2"/><rect x="17.300" y="15.200" width="13.600" height="14.600" rx="1.500" fill="#1d4a5c" stroke="#2ec4a6" stroke-width="1.400"/><path d="M14 8.500 V15 M10.800 11.800 H17.200" stroke="#2ec4a6" stroke-width="1.600"/></svg>
<svg style="left:11.5px;top:262.5px;" width="48" height="44" viewBox="0 0 48 44"><path d="M17.500 12.500 L31.500 21.500 L22.500 23.300 L17.800 30.500 Z" fill="#dcdcdc"/><path d="M41.500 32.700 L41.500 39.700 L34.500 39.700 Z" fill="#f0f0f0"/></svg>
<svg style="left:11.5px;top:309.5px;" width="48" height="44" viewBox="0 0 48 44"><circle cx="24" cy="23" r="12.800" fill="none" stroke="#e0e0e0" stroke-width="1.400" stroke-dasharray="3.200 2.400"/><circle cx="24" cy="23" r="7.500" fill="none" stroke="#6e7fe0" stroke-width="6"/><circle cx="24" cy="23" r="3.600" fill="#333" stroke="#e8e8e8" stroke-width="1.500"/><path d="M30.500 11 L37.500 9.500 L35.500 17 Z" fill="#d8d8d8"/></svg>
<svg style="left:11.5px;top:356.5px;" width="48" height="44" viewBox="0 0 48 44"><rect x="10.500" y="9.500" width="19.500" height="19.500" fill="#7c7c7c" stroke="#e0e0e0" stroke-width="1.200"/><defs><clipPath id="cpc"><rect x="8" y="8" width="30" height="28"/></clipPath></defs><circle cx="37.700" cy="35.500" r="25.500" fill="#333" clip-path="url(#cpc)"/><path d="M12.200 35.500 A25.500 25.500 0 0 1 37.700 10 V17.500 A18 18 0 0 0 19.700 35.500 Z" fill="#a82438"/><path d="M12.800 35.500 A24.900 24.900 0 0 1 37.700 10.600" fill="none" stroke="#f05068" stroke-width="1.300"/></svg>
<svg style="left:11.5px;top:403.5px;" width="48" height="44" viewBox="0 0 48 44"><path d="M10.500 34.500 L15.500 20 L26.500 13 L33 19.500 L26 30.500 Z" fill="#cfcfcf"/><path d="M10.500 34.500 L26 30.500 L33 19.500 Z" fill="#8f8f8f"/><circle cx="21.500" cy="24" r="2.200" fill="#333"/><path d="M11 34 L20.500 25" stroke="#333" stroke-width="1.200"/><rect x="27.500" y="7.500" width="9" height="8.500" rx="1.500" fill="#f0604c" transform="rotate(45 32 11.700)"/></svg>
<svg style="left:11.5px;top:450.5px;" width="48" height="44" viewBox="0 0 48 44"><path d="M12.500 33.500 L15.500 25.500 L30.500 10.500 L36.500 16.500 L21.500 31.500 Z" fill="#dfc458"/><path d="M12.500 33.500 L15.500 25.500 L21.500 31.500 Z" fill="#ecd9a0"/><path d="M30.500 10.500 L32.800 8.200 a2 2 0 0 1 2.800 0 L38.800 11.400 a2 2 0 0 1 0 2.800 L36.500 16.500 Z" fill="#e85ad8"/><path d="M18 36.500 C25 38.500 26 30.500 30 29 C32.500 28 34.500 28.500 36 29" fill="none" stroke="#dcdcdc" stroke-width="1.300"/></svg>
<svg style="left:11.5px;top:497.5px;" width="48" height="44" viewBox="0 0 48 44"><path d="M12.200 35 C15 23 25 14 35.800 12 C33 23 24 32.500 12.200 35 Z" fill="#ee7a2c"/><path d="M12 14 L16.500 19.500 M10.500 15.500 L14 12.500 M15 21 L18.500 18 M29 28.500 L33.500 34 M27.500 30 L31 27 M32 35.500 L35.500 32.500" stroke="#dcdcdc" stroke-width="1.400"/></svg>
<svg style="left:11.5px;top:544.5px;" width="48" height="44" viewBox="0 0 48 44"><path d="M22.500 20.500 C24 14 30 9 36.500 8.500 C37.500 14 33.500 21 27.500 24.500 Z" fill="#2a9ef0"/><path d="M11.500 31 C15 31 14.500 24 19.500 22.500 C23 21.500 26.500 25 24.500 28.500 C22.500 32 16 33.500 11.500 31 Z" fill="#b88878"/><path d="M17.500 35 C24 37.500 25.500 30 28.500 28.500 C30.500 27.500 32.500 28 34 28.500" fill="none" stroke="#dcdcdc" stroke-width="1.300"/><path d="M35 22 V35" stroke="#e8e8e8" stroke-width="1.500"/><circle cx="35" cy="28.500" r="1.900" fill="#e8e8e8"/><circle cx="35" cy="22" r="1.200" fill="#e8e8e8"/><circle cx="35" cy="35" r="1.200" fill="#e8e8e8"/></svg>
<svg style="left:11.5px;top:591.5px;" width="48" height="44" viewBox="0 0 48 44"><path d="M10.500 34.500 L21 22.500 L25.500 27 L24.500 31.500 Z" fill="#9a9a9a"/><path d="M10.500 34.500 L24.500 31.500 L25.500 27 Z" fill="#6c6c6c"/><path d="M21.500 20.500 L31 10.500 a4.200 4.200 0 0 1 6 6 L27.500 26.500 Z" fill="#b87858"/><circle cx="33.500" cy="13.500" r="1.500" fill="#333"/></svg>
<svg style="left:11.5px;top:638.5px;" width="48" height="44" viewBox="0 0 48 44"><path d="M21 16 L31.500 11.500 L37 21.500 L36 27.500 L27.500 32 L20.500 25 Z" fill="#c8c8c8"/><path d="M27.500 32 L36 27.500 L37 21.500 L30 24 Z" fill="#8c8c8c"/><ellipse cx="30" cy="17.500" rx="7" ry="3.200" fill="none" stroke="#f0f0f0" stroke-width="1.500" transform="rotate(-18 30 17.500)"/><path d="M14.500 29 V19.500 L22 11" fill="none" stroke="#2a9ef0" stroke-width="1.600" stroke-dasharray="4 2.500"/><circle cx="14.500" cy="30.500" r="2.600" fill="#333" stroke="#f0f0f0" stroke-width="1.400"/><circle cx="14.500" cy="18" r="2.300" fill="#f0f0f0"/><circle cx="22.500" cy="10" r="2.300" fill="#f0f0f0"/></svg>
<svg style="left:11.5px;top:685.5px;" width="48" height="44" viewBox="0 0 48 44"><defs><linearGradient id="tg1" x1="0" y1="0" x2="0" y2="1"><stop offset="0" stop-color="#f0d890"/><stop offset="0.450" stop-color="#e8c8b0"/><stop offset="0.550" stop-color="#c8e4f4"/><stop offset="1" stop-color="#2a9ee0"/></linearGradient></defs><g transform="rotate(45 24 22)"><rect x="15.500" y="11" width="7" height="22" rx="2" fill="url(#tg1)"/><rect x="25.500" y="11" width="7" height="22" rx="2" fill="url(#tg1)"/></g><path d="M14.500 32.500 L34.500 12.500" stroke="#e8e8e8" stroke-width="1.500"/><circle cx="13.500" cy="33.500" r="2.600" fill="#333" stroke="#f0f0f0" stroke-width="1.400"/><circle cx="35.500" cy="11.500" r="2.600" fill="#333" stroke="#f0f0f0" stroke-width="1.400"/><path d="M41.500 32.700 L41.500 39.700 L34.500 39.700 Z" fill="#f0f0f0"/></svg>
<svg style="left:11.5px;top:732.5px;" width="48" height="44" viewBox="0 0 48 44"><rect x="10.500" y="11.500" width="27" height="21" rx="2" fill="#5aa0c8"/><path d="M12 24 C16 22.500 19 23 22 25 C26 27.500 31 26 36 23 V31 H12 Z" fill="#184a60"/><circle cx="31" cy="17" r="2.600" fill="#e8e8e8"/><path d="M13.500 19.500 h12 a2 2 0 0 0 -3.500 -1.500 a3 3 0 0 0 -5.500 0 a2 2 0 0 0 -3 1.500 Z" fill="#e8e8e8"/></svg>
<svg style="left:11.5px;top:779.5px;" width="48" height="44" viewBox="0 0 48 44"><path d="M11.500 14.500 H32.500 V35 M16.500 10 V30.500 H36.500" fill="none" stroke="#e0e0e0" stroke-width="2.600"/><path d="M12.500 33.500 L34.500 11.500" stroke="#cfcfcf" stroke-width="1.300"/></svg>
<svg style="left:11.5px;top:826.5px;" width="48" height="44" viewBox="0 0 48 44"><rect x="13" y="11.500" width="22" height="21.500" fill="#222c2e" stroke="#e0e0e0" stroke-width="1.600"/></svg>
<svg style="left:11.5px;top:873.5px;" width="48" height="44" viewBox="0 0 48 44"><circle cx="24" cy="22" r="11" fill="#222c2e" stroke="#e0e0e0" stroke-width="1.600"/></svg>
<svg style="left:11.5px;top:920.5px;" width="48" height="44" viewBox="0 0 48 44"><rect x="13" y="11" width="22" height="22" rx="5.500" fill="#222c2e" stroke="#e0e0e0" stroke-width="1.600"/><path d="M41.500 32.700 L41.500 39.700 L34.500 39.700 Z" fill="#f0f0f0"/></svg>
<svg style="left:11.5px;top:967.5px;" width="48" height="44" viewBox="0 0 48 44"><rect x="20.500" y="18" width="16.500" height="17" fill="#2a7f90" stroke="#7ad4f0" stroke-width="1.400" stroke-dasharray="3 2"/><circle cx="21" cy="19.300" r="9.600" fill="#2a7f90" stroke="#7ad4f0" stroke-width="1.400" stroke-dasharray="3 2"/><path d="M19.800 17.500 H31 V19.300 a10 10 0 0 1 -11.200 9.900 Z" fill="#44f08c"/></svg>
<svg style="left:11.5px;top:1014.5px;" width="48" height="44" viewBox="0 0 48 44"><rect x="12.500" y="11" width="23" height="23" fill="none" stroke="#2a7cb0" stroke-width="1.600"/><rect x="10.800" y="9.300" width="3.400" height="3.400" rx="1" fill="#2a7cb0"/><rect x="33.800" y="9.300" width="3.400" height="3.400" rx="1" fill="#2a7cb0"/><rect x="10.800" y="32.300" width="3.400" height="3.400" rx="1" fill="#2a7cb0"/><rect x="33.800" y="32.300" width="3.400" height="3.400" rx="1" fill="#2a7cb0"/><text x="24" y="30.300" font-size="22.500" text-anchor="middle" fill="#c8c8c8" font-family="Liberation Sans,sans-serif">A</text><path d="M41.500 32.700 L41.500 39.700 L34.500 39.700 Z" fill="#f0f0f0"/></svg>
<svg style="left:11.5px;top:1061.5px;" width="48" height="44" viewBox="0 0 48 44"><path d="M12.500 35 L26 21.500" stroke="#b8b8b8" stroke-width="3.400" stroke-linecap="round"/><path d="M12.500 35 L24 23.500" stroke="#8a8a8a" stroke-width="1.200"/><path d="M24 19 L28.500 23.500" stroke="#9a9a9a" stroke-width="3"/><circle cx="32" cy="14.500" r="5.800" fill="#c8845c"/><path d="M25 20 L29.500 15.500 L32.500 18.500 L28 23 Z" fill="#c8845c"/><path d="M41.500 32.700 L41.500 39.700 L34.500 39.700 Z" fill="#f0f0f0"/></svg>
<svg style="left:11.5px;top:1108.5px;" width="48" height="44" viewBox="0 0 48 44"><g transform="rotate(-35 24 22)"><rect x="8.500" y="16.500" width="31" height="10" rx="1" fill="#e0c040"/><rect x="8.500" y="24" width="31" height="2.500" fill="#c8a020"/><path d="M13.500 19 v4 M18 19 v3 M22.500 19 v4 M27 19 v3 M31.500 19 v4 M36 19 v3" stroke="#333" stroke-width="1.400"/></g><path d="M41.500 32.700 L41.500 39.700 L34.500 39.700 Z" fill="#f0f0f0"/></svg>
<div style="left:12px;top:1165px;width:48px;height:2px;background:#6a6a6a;"></div>
<svg style="left:11.5px;top:1176.5px;" width="48" height="44" viewBox="0 0 48 44"><path d="M13 32.500 L20.500 25" stroke="#d0a070" stroke-width="4.800" stroke-linecap="butt"/><circle cx="27" cy="19" r="9.300" fill="#a8dcf8" stroke="#d8d8d8" stroke-width="3"/><circle cx="27" cy="19" r="6.800" fill="none" stroke="#333" stroke-width="0.800"/><path d="M22.500 19 a4.500 4.500 0 0 1 4.500 -4.500" fill="none" stroke="#e8f6ff" stroke-width="1.600"/><path d="M41.500 32.700 L41.500 39.700 L34.500 39.700 Z" fill="#f0f0f0"/></svg>
<svg style="left:14px;top:1257px;" width="46" height="80" viewBox="0 0 46 80"><circle cx="22.400" cy="23" r="19.200" fill="#ffffff" stroke="#4a4a4a" stroke-width="2"/>
<path d="M29.800 15.600 L35.400 10" stroke="#f01020" stroke-width="3"/>
<circle cx="22.400" cy="23" r="10.200" fill="#333" stroke="#4a4a4a" stroke-width="2"/>
<circle cx="22.400" cy="41.700" r="18.700" fill="#9c9587" stroke="#484848" stroke-width="2.600"/>
<path d="M14 65.500 C16.500 73.500 28.500 73.500 31 65.500 M12.500 67.800 L14 65 L17 66.500 M28 66.500 L31 65 L32.500 67.800" fill="none" stroke="#9a9a9a" stroke-width="1.400"/></svg>
<svg style="left:820px;top:267px;overflow:hidden;" width="879" height="1132" viewBox="0 0 879 1132"><rect x="0" y="0" width="879" height="1132" fill="#cbc9c3"/><polygon points="20,0 121.5,0 121.5,11 20,11" fill="#2c2522" /><polygon points="121.5,0 129,0 129,11 121.5,11" fill="#dcdad4" /><polygon points="129,0 146,0 178,11 129,11" fill="#5a88aa" /><polygon points="146,0 165,0 210,11 178,11" fill="#e4e2dc" /><polygon points="229,0 258,0 302,11 284,11" fill="#8f8a7c" /><polygon points="510,0 514,0 514,11 510,11" fill="#b4b0a6" /><polygon points="8,0 11.5,0 11.5,179 8,177" fill="#6f6b62" /><polygon points="11.5,0 20,0 20,183 11.5,179" fill="#e2e0dc" /><polygon points="6,0 8,0 8,177 6,176" fill="#a8869c" /><polygon points="6,174 20,181 20,188 6,181" fill="#5c584f" /><polygon points="0,373 20,373 20,395 0,395" fill="#b8b4a6" /><polygon points="0,415 20,415 20,419 0,419" fill="#4a4a4a" /><polygon points="0,419 20,419 20,428 0,428" fill="#9a9a9a" /><polygon points="0,428 20,430 20,435 0,433" fill="#1e1e1e" /><polygon points="0,638 20,619 20,626 0,645" fill="#5a3f5a" /><polygon points="0,645 20,626 20,645 0,659" fill="#b8b8b8" /><polygon points="0,659 20,645 20,651 0,666" fill="#262626" /><polygon points="0,983 879,983 879,1132 0,1132" fill="#3d3b34" /><polygon points="0,983 174,983 0,1013" fill="#d0cec8" /><polygon points="178,983 308,983 183,1017" fill="#d4d2cc" /><polygon points="100,995 145,987 170,983 183,1017 190,1063 130,1085" fill="#45423a" /><polygon points="183,1017 308,983 445,983 445,995 192,1067" fill="#4a443f" /><polygon points="220,1007 242,1001 242,1053 226,1057" fill="#6a5e5a" /><polygon points="275,992 445,983 445,995 275,1043" fill="#6c665e" /><polygon points="308,983 580,983 445,997 330,1023" fill="#6e695f" /><polygon points="0,1121 445,995 470,983 510,983 445,1006 0,1128.5" fill="#8c8776" /><polygon points="0,1128.5 445,1006 510,983 530,983 445,1013 16,1132 0,1132" fill="#34322b" /><polygon points="16,1132 445,1013 530,983 879,983 879,1132" fill="#a8224f" /><polygon points="535,983 879,983 879,1040 850,1036 647,1003 541,992" fill="#7e7869" /><polygon points="541,992 647,1003 850,1036 879,1040 879,1047 850,1043 647,1010 541,998" fill="#46423a" /><polygon points="740,1029 879,1051 879,1108 820,1101 740,1073" fill="#8c1d43" /><polygon points="195,1082 334,1043 423,1075 298,1116" fill="#97204a" /><polygon points="334,1043 445,1013 480,1003 480,1078 420,1073" fill="#5c0f2b" /><ellipse cx="631.4" cy="1046.2" rx="17" ry="6.500" fill="#e0d4d8"/><polygon points="560,1062 620,1054 629,1060 570,1117 544,1112 578,1079 552,1074" fill="#e0d4d8" /><polygon points="486,1096 558,1090 550,1098 498,1105" fill="#e0d4d8" /><ellipse cx="442" cy="1104" rx="22" ry="8" fill="#e0d4d8"/><path d="M270 1135 C310 1111 375 1109 408 1125" fill="none" stroke="#e0d4d8" stroke-width="10"/><polygon points="355,1132 395,1110 412,1119 390,1132" fill="#e0d4d8" /><polygon points="445.7,983 488.6,983 493.9,994.4 510,1031.9 535,1056.9 585,1069.4 586.8,1076.6 572.5,1089.1 493.9,1080.1 488.6,1073 481.4,1087.3 454.6,1080.1 449.3,1031.9" fill="#241c14" /><polygon points="492.1,983 542.1,983 549.3,1001.6 570.7,1026.6 610,1044.4 613.6,1053.4 606.4,1056.9 560,1058.7 535,1056.9 510,1031.9" fill="#241c14" /><polygon points="493,995 502,1003 525,1051 548,1071 532,1069 508,1045" fill="#5a3a22" /><polygon points="452,995 486,989 488,995 454,1003" fill="#6a4a30" /><polygon points="450,1012 484,1005 485,1009 451,1016" fill="#a08068" /><polygon points="520,989 532,987 542,1021 536,1019" fill="#4a3220" /></svg>
<div style="left:839px;top:277px;width:1201px;height:975px;background:#252525;"></div>
<div style="left:840px;top:278.7px;width:1198px;height:971.3px;background:#363636;"></div>
<div style="left:840px;top:278.7px;width:1198px;height:33.3px;background:#3b3b3b;"></div>
<span class="t" id="t20" style="left:1403.40px;top:287.46px;font-size:18px;color:#e8e8e8;transform:scaleX(0.9983);">Settings</span>
<svg style="left:2015px;top:287.6px;" width="18" height="18" viewBox="0 0 18 18"><path d="M2.500 2.500 L14.500 14.500 M14.500 2.500 L2.500 14.500" stroke="#f0f0f0" stroke-width="1.900"/></svg>
<div style="left:848px;top:318px;width:258px;height:29.5px;background:#1e1e1e;border-radius:5px;"></div>
<svg style="left:853px;top:322px;" width="24" height="24" viewBox="0 0 24 24"><circle cx="10" cy="9.800" r="6.300" fill="none" stroke="#e8e8e8" stroke-width="1.800"/><path d="M14.500 14.500 L20 20" stroke="#e8e8e8" stroke-width="1.900"/></svg>
<span class="t" id="t21" style="left:879.09px;top:326.61px;font-size:17px;color:#8e8e8e;transform:scaleX(0.9241);">Search</span>
<div style="left:847px;top:359px;width:260px;height:39px;background:#4d6a8f;border-radius:4px;"></div>
<span class="t" id="t22" style="left:859.88px;top:370.66px;font-size:18px;color:#e2e2e2;transform:scaleX(0.9734);">General</span>
<span class="t" id="t23" style="left:859.60px;top:415.76px;font-size:18px;color:#e2e2e2;transform:scaleX(0.9985);">Machine Learning</span>
<span class="t" id="t24" style="left:859.83px;top:460.86px;font-size:18px;color:#e2e2e2;transform:scaleX(1.0067);">Colour</span>
<span class="t" id="t25" style="left:859.64px;top:505.96px;font-size:18px;color:#e2e2e2;transform:scaleX(0.9824);">Performance</span>
<span class="t" id="t26" style="left:859.91px;top:551.06px;font-size:18px;color:#e2e2e2;transform:scaleX(0.9835);">User Interface</span>
<span class="t" id="t27" style="left:860.75px;top:596.16px;font-size:18px;color:#e2e2e2;transform:scaleX(0.9740);">Tools</span>
<span class="t" id="t28" style="left:859.80px;top:641.26px;font-size:18px;color:#e2e2e2;transform:scaleX(1.0055);">Shortcuts</span>
<span class="t" id="t29" style="left:861.46px;top:686.36px;font-size:18px;color:#e2e2e2;transform:scaleX(0.9656);">Assistant</span>
<span class="t" id="t30" style="left:859.74px;top:731.46px;font-size:18px;color:#e2e2e2;transform:scaleX(0.9607);">Linked Services</span>
<span class="t" id="t31" style="left:859.63px;top:776.56px;font-size:18px;color:#e2e2e2;transform:scaleX(0.9924);">Miscellaneous</span>
<span class="t" id="t32" style="left:1126.57px;top:332.02px;font-size:21px;color:#e8e8e8;transform:scaleX(0.9676);">General</span>
<div style="left:1112px;top:370px;width:899px;height:815px;background:#2a2a2a;"></div>
<div style="left:1120px;top:370px;width:884px;height:806.5px;background:#363636;"></div>
<div style="left:2011px;top:370px;width:27px;height:815px;background:#3d3d3d;"></div>
<svg style="left:2014px;top:374px;" width="20" height="20" viewBox="0 0 20 20"><path d="M5 15 L10.300 4.500 L15.600 15 Z" fill="#7a7a7a"/></svg>
<svg style="left:2014px;top:1163px;" width="20" height="20" viewBox="0 0 20 20"><path d="M5 5 L10.300 15.500 L15.600 5 Z" fill="#7a7a7a"/></svg>
<div style="left:2019px;top:532.5px;width:10.3px;height:625.5px;background:#878787;border-radius:5.1px;"></div>
<div style="left:1173px;top:370px;width:18px;height:17px;background:#222222;border-radius:0 0 3px 3px;"></div>
<span class="t" id="t33" style="left:1199.00px;top:371.11px;font-size:17px;color:#bababa;transform:scaleX(0.9718);">Automatically update linked resources when modified externally</span>
<div style="left:1173px;top:397px;width:18px;height:18px;background:#222222;border-radius:3px;"></div>
<svg style="left:1173px;top:397px;" width="18" height="18" viewBox="0 0 18 18"><path d="M4.300 9.300 L7.600 12.500 L13.800 5.800" fill="none" stroke="#f0f0f0" stroke-width="1.600"/></svg>
<span class="t" id="t34" style="left:1198.66px;top:399.11px;font-size:17px;color:#bababa;transform:scaleX(0.9689);">Save thumbnails with documents</span>
<div style="left:1173px;top:425px;width:18px;height:18px;background:#222222;border-radius:3px;"></div>
<span class="t" id="t35" style="left:1198.63px;top:427.11px;font-size:17px;color:#bababa;transform:scaleX(0.9461);">Enable "Save" over imported PSD files</span>
<span class="t" id="t36" style="left:1216.31px;top:455.26px;font-size:18px;color:#a2a2a2;transform:scaleX(0.9868);">Warning: This option is only recommended for users who wish to use PSD as an</span>
<span class="t" id="t37" style="left:1215.04px;top:479.51px;font-size:18px;color:#a2a2a2;transform:scaleX(1.0212);">interchange format with DAM applications. Incompatibility between the Affinity format</span>
<span class="t" id="t38" style="left:1215.62px;top:503.26px;font-size:18px;color:#a2a2a2;transform:scaleX(0.9887);">and PSD may cause certain document features to get rasterised or lost.</span>
<span class="t" id="t39" style="left:1156.71px;top:544.86px;font-size:17px;color:#c8c8c8;font-weight:bold;transform:scaleX(0.9622);">Text</span>
<div style="left:1173px;top:575px;width:18px;height:18px;background:#222222;border-radius:3px;"></div>
<span class="t" id="t40" style="left:1198.59px;top:577.11px;font-size:17px;color:#bababa;transform:scaleX(0.9588);">Preserve Unicode breaks when copying plain text</span>
<div style="left:1173px;top:603px;width:18px;height:18px;background:#222222;border-radius:3px;"></div>
<span class="t" id="t41" style="left:1198.07px;top:605.11px;font-size:17px;color:#bababa;transform:scaleX(0.9772);">Insert filler text as text</span>
<div style="left:1173px;top:631px;width:18px;height:18px;background:#222222;border-radius:3px;"></div>
<svg style="left:1173px;top:631px;" width="18" height="18" viewBox="0 0 18 18"><path d="M4.300 9.300 L7.600 12.500 L13.800 5.800" fill="none" stroke="#f0f0f0" stroke-width="1.600"/></svg>
<span class="t" id="t42" style="left:1198.08px;top:633.11px;font-size:17px;color:#bababa;transform:scaleX(0.9744);">Import PSD text as text rather than bitmap</span>
<span class="t" id="t43" style="left:1156.35px;top:672.36px;font-size:17px;color:#c8c8c8;font-weight:bold;transform:scaleX(0.9749);">Other</span>
<div style="left:1173px;top:703px;width:18px;height:18px;background:#222222;border-radius:3px;"></div>
<svg style="left:1173px;top:703px;" width="18" height="18" viewBox="0 0 18 18"><path d="M4.300 9.300 L7.600 12.500 L13.800 5.800" fill="none" stroke="#f0f0f0" stroke-width="1.600"/></svg>
<span class="t" id="t44" style="left:1198.64px;top:705.11px;font-size:17px;color:#bababa;transform:scaleX(0.9267);">Copy items as SVG</span>
<div style="left:1173px;top:731px;width:18px;height:18px;background:#222222;border-radius:3px;"></div>
<svg style="left:1173px;top:731px;" width="18" height="18" viewBox="0 0 18 18"><path d="M4.300 9.300 L7.600 12.500 L13.800 5.800" fill="none" stroke="#f0f0f0" stroke-width="1.600"/></svg>
<span class="t" id="t45" style="left:1198.53px;top:733.11px;font-size:17px;color:#bababa;transform:scaleX(0.9775);">Prefer metafile to raster when pasting from external application</span>
<div style="left:1173px;top:759px;width:18px;height:18px;background:#222222;border-radius:3px;"></div>
<svg style="left:1173px;top:759px;" width="18" height="18" viewBox="0 0 18 18"><path d="M4.300 9.300 L7.600 12.500 L13.800 5.800" fill="none" stroke="#f0f0f0" stroke-width="1.600"/></svg>
<span class="t" id="t46" style="left:1198.54px;top:761.11px;font-size:17px;color:#bababa;transform:scaleX(0.9707);">Prefer to keep selection after delete</span>
<div style="left:1173px;top:787px;width:18px;height:18px;background:#222222;border-radius:3px;"></div>
<svg style="left:1173px;top:787px;" width="18" height="18" viewBox="0 0 18 18"><path d="M4.300 9.300 L7.600 12.500 L13.800 5.800" fill="none" stroke="#f0f0f0" stroke-width="1.600"/></svg>
<span class="t" id="t47" style="left:1198.60px;top:789.11px;font-size:17px;color:#bababa;transform:scaleX(0.9593);">Load metadata from XMP sidecars</span>
<div style="left:1173px;top:815px;width:18px;height:18px;background:#222222;border-radius:3px;"></div>
<span class="t" id="t48" style="left:1198.68px;top:817.11px;font-size:17px;color:#bababa;transform:scaleX(0.9408);">Refine HEIC depth maps</span>
<div style="left:1173px;top:843px;width:18px;height:18px;background:#222222;border-radius:3px;"></div>
<span class="t" id="t49" style="left:1198.12px;top:845.11px;font-size:17px;color:#bababa;transform:scaleX(0.9630);">Import PSD smart objects where possible</span>
<div style="left:1173px;top:871px;width:18px;height:18px;background:#222222;border-radius:3px;"></div>
<span class="t" id="t50" style="left:1198.54px;top:873.11px;font-size:17px;color:#bababa;transform:scaleX(0.9716);">Link new content categories</span>
<div style="left:1173px;top:899px;width:18px;height:18px;background:#222222;border-radius:3px;"></div>
<svg style="left:1173px;top:899px;" width="18" height="18" viewBox="0 0 18 18"><path d="M4.300 9.300 L7.600 12.500 L13.800 5.800" fill="none" stroke="#f0f0f0" stroke-width="1.600"/></svg>
<span class="t" id="t51" style="left:1198.30px;top:901.11px;font-size:17px;color:#bababa;transform:scaleX(0.9554);">Only return safe results for stock image searches</span>
<div style="left:1173px;top:927px;width:18px;height:18px;background:#222222;border-radius:3px;"></div>
<span class="t" id="t52" style="left:1198.66px;top:929.11px;font-size:17px;color:#bababa;transform:scaleX(0.9757);">Send usage and performance data to Affinity</span>
<div style="left:1173px;top:955px;width:18px;height:18px;background:#222222;border-radius:3px;"></div>
<span class="t" id="t53" style="left:1198.50px;top:957.11px;font-size:17px;color:#bababa;transform:scaleX(0.9855);">Help improve the product by automatically uploading crash reports</span>
<span class="t" id="t54" style="left:1169.49px;top:996.61px;font-size:17px;color:#bababa;transform:scaleX(0.9889);">Store fonts (*.affont) will be loaded from the Affinity Fonts folder on startup:</span>
<div style="left:1201px;top:1025.5px;width:339px;height:30.5px;background:#444444;border-radius:4px;"></div>
<span class="t" id="t55" style="left:1213.50px;top:1032.96px;font-size:18px;color:#e8e8e8;transform:scaleX(1.0006);">Open Affinity Fonts Folder in Explorer...</span>
<span class="t" id="t56" style="left:1370.83px;top:1103.11px;font-size:17px;color:#bababa;transform:scaleX(0.9637);">*Language:</span>
<div style="left:1469px;top:1097.5px;width:186.5px;height:25px;background:#222222;border-radius:3px;"></div>
<svg style="left:1636px;top:1102px;" width="16" height="14" viewBox="0 0 16 14"><path d="M3 4.300 L8 9.200 L13 4.300" fill="none" stroke="#f0f0f0" stroke-width="1.800"/></svg>
<span class="t" id="t57" style="left:1878.35px;top:1152.11px;font-size:17px;color:#a8a8a8;transform:scaleX(0.9422);">*Requires restart</span>
<div style="left:1908px;top:1203px;width:112px;height:29px;background:#444444;border-radius:4px;"></div>
<span class="t" id="t58" style="left:1942.49px;top:1209.81px;font-size:17px;color:#e8e8e8;transform:scaleX(0.9617);">Close</span>
<div style="left:1468px;top:1124.5px;width:202px;height:309px;background:#5a5a5a;"></div>
<div style="left:1470px;top:1126.5px;width:198px;height:305px;background:#333333;"></div>
<div style="left:1470px;top:1194.5px;width:198px;height:33.5px;background:#2b3c52;"></div>
<span class="t" id="t59" style="left:1474.84px;top:1136.41px;font-size:17px;color:#e6e6e6;transform:scaleX(0.9717);">Deutsch</span>
<span class="t" id="t60" style="left:1474.83px;top:1170.41px;font-size:17px;color:#e6e6e6;transform:scaleX(0.9738);">English (United Kingdom)</span>
<span class="t" id="t61" style="left:1474.92px;top:1204.41px;font-size:17px;color:#e6e6e6;transform:scaleX(0.9508);">English (United States)</span>
<span class="t" id="t62" style="left:1475.81px;top:1238.41px;font-size:17px;color:#e6e6e6;transform:scaleX(0.9621);">español</span>
<span class="t" id="t63" style="left:1476.17px;top:1272.41px;font-size:17px;color:#e6e6e6;transform:scaleX(0.9413);">français</span>
<span class="t" id="t64" style="left:1475.30px;top:1306.41px;font-size:17px;color:#e6e6e6;transform:scaleX(1.0147);">italiano</span>
<span class="t" id="t65" style="left:1473.63px;top:1340.41px;font-size:17px;color:#e6e6e6;font-family:"Liberation Sans","Noto Sans CJK JP",sans-serif;transform:scaleX(1.1282);">日本語</span>
<span class="t" id="t66" style="left:1475.54px;top:1374.41px;font-size:17px;color:#e6e6e6;transform:scaleX(0.9621);">português (Brasil)</span>
<span class="t" id="t67" style="left:1475.13px;top:1408.41px;font-size:17px;color:#e6e6e6;font-family:"Liberation Sans","Noto Sans CJK SC",sans-serif;transform:scaleX(0.9444);">中文(简体)</span>
<div style="left:2481px;top:165.5px;width:399px;height:1323.5px;background:#363636;"></div>
<div style="left:2481px;top:165.5px;width:399px;height:44px;background:#272727;"></div>
<div style="left:2481px;top:165.5px;width:27px;height:44px;background:#2b2b2b;"></div>
<div style="left:2508px;top:168px;width:64px;height:41.5px;background:#363636;"></div>
<div style="left:2491.3px;top:181px;width:1.9px;height:12.5px;background:#909090;"></div>
<div style="left:2496.3px;top:181px;width:1.9px;height:12.5px;background:#909090;"></div>
<span class="t" id="t68" style="left:2514.67px;top:178.91px;font-size:17px;color:#f0f0f0;transform:scaleX(0.9934);">Colour</span>
<span class="t" id="t69" style="left:2579.39px;top:178.91px;font-size:17px;color:#b8b8b8;transform:scaleX(0.9289);">Swatches</span>
<span class="t" id="t70" style="left:2661.06px;top:178.91px;font-size:17px;color:#b8b8b8;transform:scaleX(0.9756);">Stroke</span>
<span class="t" id="t71" style="left:2722.50px;top:178.91px;font-size:17px;color:#b8b8b8;transform:scaleX(0.9610);">Appearance</span>
<svg style="left:2852px;top:179.5px;" width="16" height="16" viewBox="0 0 16 16"><rect x="0" y="0" width="16" height="3" fill="#9a9a9a"/><rect x="0" y="6.300" width="16" height="3" fill="#9a9a9a"/><rect x="0" y="12.600" width="16" height="3" fill="#9a9a9a"/></svg>
<svg style="left:2495px;top:228px;" width="140" height="80" viewBox="0 0 140 80"><circle cx="27" cy="26.5" r="18" fill="#ffffff" stroke="#4c4c4c" stroke-width="2.800"/><path d="M34 20.7 L41 14.8 M20 32.3 L13 38.2" stroke="#f01828" stroke-width="3"/><circle cx="27" cy="26.5" r="9.300" fill="#363636" stroke="#4c4c4c" stroke-width="2.400"/><circle cx="18.3" cy="54.7" r="8.600" fill="#e4e4e4"/><path d="M12.5 61 L24.5 48.5" stroke="#e82030" stroke-width="2.200"/><circle cx="45.7" cy="45.6" r="18.600" fill="#9c9587" stroke="#484848" stroke-width="3"/><path d="M48 10 C57 11 62 17 62 24.5 M51.5 7.5 L47.5 10 L50 14 M58.5 22 L62 25.5 L65 21.5" fill="none" stroke="#8c8c8c" stroke-width="1.400"/><path d="M82 30.5 L96 16.5" stroke="#b4b4b4" stroke-width="3.600" stroke-linecap="round"/><path d="M94 14 L98.5 18.5" stroke="#9a9a9a" stroke-width="3"/><circle cx="102" cy="10.5" r="5.600" fill="#c8845c"/><path d="M95 15 L99.5 10.5 L102.5 13.5 L98 18 Z" fill="#c8845c"/><circle cx="120.5" cy="18.4" r="11.200" fill="#ff0000" stroke="#474b4b" stroke-width="2.600"/></svg>
<div style="left:2568.6px;top:263.8px;width:223.4px;height:223.4px;border-radius:50%;background:conic-gradient(from 90deg,#ff0000,#ffff00,#00ff00,#00ffff,#0000ff,#ff00ff,#ff0000);-webkit-mask:radial-gradient(circle closest-side,transparent 89.2px,#000 90.2px,#000 110.9px,transparent 111.7px);mask:radial-gradient(circle closest-side,transparent 89.2px,#000 90.2px,#000 110.9px,transparent 111.7px);"></div>
<svg style="left:2590px;top:280px;" width="190" height="180" viewBox="0 0 190 180"><defs>
<linearGradient id="trih" gradientUnits="userSpaceOnUse" x1="6.7" y1="127.8" x2="160.6" y2="152.9"><stop offset="0" stop-color="#ffffff"/><stop offset="1" stop-color="#ffa600"/></linearGradient>
<linearGradient id="trib" gradientUnits="userSpaceOnUse" x1="105.2" y1="6.5" x2="95.65" y2="140.35"><stop offset="0" stop-color="#000" stop-opacity="1"/><stop offset="1" stop-color="#000" stop-opacity="0"/></linearGradient>
</defs>
<polygon points="105.2,6.5 6.7,127.8 160.6,152.9" fill="url(#trih)"/>
<polygon points="105.2,6.5 6.7,127.8 160.6,152.9" fill="url(#trib)"/>
<circle cx="57" cy="82.1" r="7.200" fill="#9c9587" stroke="#ffffff" stroke-width="2.200"/>
<circle cx="169" cy="158.7" r="7.200" fill="#ffa600" stroke="#ffffff" stroke-width="2.200"/></svg>
<div style="left:2821px;top:251.5px;width:43px;height:128px;background:#000000;"></div>
<div style="left:2822.5px;top:252.8px;width:19px;height:19px;background:#000000;"></div>
<div style="left:2843.5px;top:252.8px;width:19px;height:19px;background:#ffffff;"></div>
<div style="left:2822.5px;top:273.8px;width:19px;height:19px;background:#857e70;"></div>
<div style="left:2843.5px;top:273.8px;width:19px;height:19px;background:#7b7468;"></div>
<div style="left:2822.5px;top:294.8px;width:19px;height:19px;background:#59524e;"></div>
<div style="left:2843.5px;top:294.8px;width:19px;height:19px;background:#8e8877;"></div>
<div style="left:2822.5px;top:315.8px;width:19px;height:19px;background:#36332d;"></div>
<div style="left:2843.5px;top:315.8px;width:19px;height:19px;background:#948e7c;"></div>
<div style="left:2822.5px;top:336.8px;width:19px;height:19px;background:#77736a;"></div>
<div style="left:2843.5px;top:336.8px;width:19px;height:19px;background:#6b675d;"></div>
<div style="left:2822.5px;top:357.8px;width:19px;height:19px;background:#655f58;"></div>
<div style="left:2843.5px;top:357.8px;width:19px;height:19px;background:#7b766b;"></div>
<span class="t" id="t72" style="left:2495.25px;top:438.26px;font-size:16px;color:#a4a4a4;transform:scaleX(0.9333);">H: 39</span>
<span class="t" id="t73" style="left:2498.47px;top:458.06px;font-size:16px;color:#a4a4a4;transform:scaleX(0.8483);">S: 10</span>
<span class="t" id="t74" style="left:2499.00px;top:477.86px;font-size:16px;color:#a4a4a4;transform:scaleX(0.8779);">L: 57</span>
<span class="t" id="t75" style="left:2773.70px;top:472.46px;font-size:16px;color:#a4a4a4;transform:scaleX(1.0420);">#:</span>
<div style="left:2791px;top:466px;width:71px;height:26.5px;background:#222222;border-radius:4px;"></div>
<span class="t" id="t76" style="left:2792.40px;top:471.26px;font-size:18px;color:#f0f0f0;transform:scaleX(0.8728);">9C9587</span>
<span class="t" id="t77" style="left:2500.96px;top:504.26px;font-size:16px;color:#b0b0b0;transform:scaleX(0.9442);">Opacity</span>
<svg style="left:2506px;top:523px;" width="30" height="30" viewBox="0 0 30 30"><circle cx="14.500" cy="14.500" r="10.800" fill="#9c9587" stroke="#4a4a4a" stroke-width="2"/></svg>
<div style="left:2542px;top:532.5px;width:217px;height:13px;border-radius:6.5px;background:linear-gradient(90deg,#f4f4f4 0%,rgba(244,244,244,0) 100%),repeating-conic-gradient(#4a4a4a 0% 25%,#3a3a3a 0% 50%) 0 0/13px 13px;"></div>
<svg style="left:2741px;top:528px;" width="22" height="22" viewBox="0 0 22 22"><circle cx="10.500" cy="10.800" r="7.300" fill="#2c2c2c" stroke="#ffffff" stroke-width="2.400"/></svg>
<div style="left:2770px;top:522.5px;width:63px;height:26.5px;background:#222222;border-radius:4px;"></div>
<span class="t" id="t78" style="left:2777.21px;top:529.26px;font-size:18px;color:#f0f0f0;transform:scaleX(0.8829);">100 %</span>
<div style="left:2834.5px;top:522.5px;width:22px;height:26.5px;background:#444444;border-radius:4px;"></div>
<svg style="left:2838px;top:530px;" width="16" height="12" viewBox="0 0 16 12"><path d="M3 2.800 L7.800 7.400 L12.600 2.800" fill="none" stroke="#f0f0f0" stroke-width="1.700"/></svg>
<div style="left:2481px;top:562.5px;width:399px;height:45.5px;background:#272727;"></div>
<div style="left:2481px;top:562.5px;width:27px;height:45.5px;background:#2b2b2b;"></div>
<div style="left:2508px;top:566px;width:61px;height:42px;background:#363636;"></div>
<div style="left:2491.3px;top:579px;width:1.9px;height:12.5px;background:#909090;"></div>
<div style="left:2496.3px;top:579px;width:1.9px;height:12.5px;background:#909090;"></div>
<span class="t" id="t79" style="left:2515.42px;top:576.81px;font-size:17px;color:#f0f0f0;transform:scaleX(0.9043);">Layers</span>
<span class="t" id="t80" style="left:2575.72px;top:576.81px;font-size:17px;color:#b8b8b8;transform:scaleX(0.9218);">Brushes</span>
<span class="t" id="t81" style="left:2648.32px;top:576.81px;font-size:17px;color:#b8b8b8;transform:scaleX(0.9245);">Quick FX</span>
<span class="t" id="t82" style="left:2726.80px;top:576.81px;font-size:17px;color:#b8b8b8;transform:scaleX(0.9203);">Styles</span>
<svg style="left:2852px;top:577.5px;" width="16" height="16" viewBox="0 0 16 16"><rect x="0" y="0" width="16" height="3" fill="#9a9a9a"/><rect x="0" y="6.300" width="16" height="3" fill="#9a9a9a"/><rect x="0" y="12.600" width="16" height="3" fill="#9a9a9a"/></svg>
<div style="left:2481px;top:608px;width:399px;height:43px;background:#3c3c3c;"></div>
<span class="t" id="t83" style="left:2492.50px;top:622.11px;font-size:17px;color:#868686;transform:scaleX(0.8953);">Opacity:</span>
<div style="left:2553.5px;top:614.5px;width:81px;height:29px;background:#353535;border-radius:4px;"></div>
<span class="t" id="t84" style="left:2561.91px;top:621.26px;font-size:18px;color:#8e8e8e;transform:scaleX(0.8810);">100 %</span>
<svg style="left:2615px;top:623px;" width="16" height="12" viewBox="0 0 16 12"><path d="M3 2.800 L7.800 7.400 L12.600 2.800" fill="none" stroke="#9a9a9a" stroke-width="1.700"/></svg>
<div style="left:2641.5px;top:614.5px;width:165px;height:29px;background:#353535;border-radius:4px;"></div>
<span class="t" id="t85" style="left:2647.44px;top:621.26px;font-size:18px;color:#8e8e8e;transform:scaleX(0.9577);">Normal</span>
<svg style="left:2787px;top:623px;" width="16" height="12" viewBox="0 0 16 12"><path d="M3 2.800 L7.800 7.400 L12.600 2.800" fill="none" stroke="#9a9a9a" stroke-width="1.700"/></svg>
<svg style="left:2813px;top:619px;" width="22" height="22" viewBox="0 0 22 22"><rect x="8.7" y="2.5" width="3.6" height="4" fill="#c4c4c4" transform="rotate(0 10.5 10.5)"/><rect x="8.7" y="2.5" width="3.6" height="4" fill="#c4c4c4" transform="rotate(45 10.5 10.5)"/><rect x="8.7" y="2.5" width="3.6" height="4" fill="#c4c4c4" transform="rotate(90 10.5 10.5)"/><rect x="8.7" y="2.5" width="3.6" height="4" fill="#c4c4c4" transform="rotate(135 10.5 10.5)"/><rect x="8.7" y="2.5" width="3.6" height="4" fill="#c4c4c4" transform="rotate(180 10.5 10.5)"/><rect x="8.7" y="2.5" width="3.6" height="4" fill="#c4c4c4" transform="rotate(225 10.5 10.5)"/><rect x="8.7" y="2.5" width="3.6" height="4" fill="#c4c4c4" transform="rotate(270 10.5 10.5)"/><rect x="8.7" y="2.5" width="3.6" height="4" fill="#c4c4c4" transform="rotate(315 10.5 10.5)"/><circle cx="10.500" cy="10.500" r="4.600" fill="none" stroke="#c4c4c4" stroke-width="3.600"/></svg>
<svg style="left:2850.5px;top:619px;" width="14" height="20" viewBox="0 0 14 20"><path d="M3.200 8.500 V5.500 a3.800 3.800 0 0 1 7.600 0 V6.500" fill="none" stroke="#c4c4c4" stroke-width="1.700"/><rect x="1" y="8.500" width="12" height="9.500" rx="1.500" fill="#c4c4c4"/></svg>
<div style="left:2481px;top:651px;width:399px;height:559px;background:#2a2a2a;"></div>
<div style="left:2481.8px;top:652px;width:370.2px;height:281.5px;background:#000000;"></div>
<div style="left:2484px;top:654px;width:22.5px;height:54px;background:#333333;"></div>
<div style="left:2509px;top:654px;width:54px;height:54px;background:#3d3d3d;"></div>
<div style="left:2565px;top:654px;width:285px;height:54px;background:#333333;"></div>
<span class="t" id="t86" style="left:2568.63px;top:673.26px;font-size:18px;color:#ececec;transform:scaleX(0.9673);">LIne</span>
<div style="left:2820.5px;top:674.5px;width:13.5px;height:13.5px;background:#a8a8a8;border-radius:7px;"></div>
<svg style="left:2488px;top:684px;" width="14" height="14" viewBox="0 0 14 14"><path d="M3.500 2.500 L10.500 6.500 L3.500 10.500" fill="none" stroke="#b8b8b8" stroke-width="1.500"/></svg>
<div style="left:2484px;top:710px;width:22.5px;height:54px;background:#333333;"></div>
<div style="left:2509px;top:710px;width:54px;height:54px;background:#3d3d3d;"></div>
<div style="left:2565px;top:710px;width:285px;height:54px;background:#333333;"></div>
<span class="t" id="t87" style="left:2569.32px;top:729.26px;font-size:18px;color:#ececec;transform:scaleX(1.0005);">Add Noise</span>
<div style="left:2820.5px;top:730.5px;width:13.5px;height:13.5px;background:#a8a8a8;border-radius:7px;"></div>
<svg style="left:2792px;top:727px;" width="14" height="20" viewBox="0 0 14 20"><path d="M3.200 8.500 V5.500 a3.800 3.800 0 0 1 7.600 0 V6.500" fill="none" stroke="#b4b4b4" stroke-width="1.700"/><rect x="1" y="8.500" width="12" height="9.500" rx="1.500" fill="#b4b4b4"/></svg>
<div style="left:2484px;top:766px;width:22.5px;height:54px;background:#333333;"></div>
<div style="left:2509px;top:766px;width:54px;height:54px;background:#3d3d3d;"></div>
<div style="left:2565px;top:766px;width:285px;height:54px;background:#333333;"></div>
<span class="t" id="t88" style="left:2569.00px;top:785.26px;font-size:18px;color:#ececec;transform:scaleX(1.0255);">aberration</span>
<div style="left:2820.5px;top:786.5px;width:13.5px;height:13.5px;background:#a8a8a8;border-radius:7px;"></div>
<svg style="left:2792px;top:783px;" width="14" height="20" viewBox="0 0 14 20"><path d="M3.200 8.500 V5.500 a3.800 3.800 0 0 1 7.600 0 V6.500" fill="none" stroke="#b4b4b4" stroke-width="1.700"/><rect x="1" y="8.500" width="12" height="9.500" rx="1.500" fill="#b4b4b4"/></svg>
<svg style="left:2488px;top:785px;" width="14" height="14" viewBox="0 0 14 14"><path d="M3.500 2.500 L10.500 6.500 L3.500 10.500" fill="none" stroke="#b8b8b8" stroke-width="1.500"/></svg>
<div style="left:2484px;top:822px;width:22.5px;height:54px;background:#3a4558;"></div>
<div style="left:2509px;top:822px;width:54px;height:54px;background:#3d3d3d;"></div>
<div style="left:2565px;top:822px;width:285px;height:54px;background:#3a4558;"></div>
<span class="t" id="t89" style="left:2568.97px;top:841.26px;font-size:18px;color:#ececec;transform:scaleX(1.0574);">art</span>
<div style="left:2820.5px;top:842.5px;width:13.5px;height:13.5px;background:#a8a8a8;border-radius:7px;"></div>
<svg style="left:2488px;top:841px;" width="14" height="14" viewBox="0 0 14 14"><path d="M3.500 2.500 L10.500 6.500 L3.500 10.500" fill="none" stroke="#b8b8b8" stroke-width="1.500"/></svg>
<div style="left:2484px;top:878px;width:22.5px;height:54px;background:#333333;"></div>
<div style="left:2509px;top:878px;width:54px;height:54px;background:#3d3d3d;"></div>
<div style="left:2565px;top:878px;width:285px;height:54px;background:#333333;"></div>
<span class="t" id="t90" style="left:2568.87px;top:897.26px;font-size:18px;color:#ececec;transform:scaleX(0.9879);">sketch</span>
<div style="left:2820.5px;top:898.5px;width:13.5px;height:13.5px;background:#474747;border-radius:7px;"></div>
<svg style="left:2488px;top:897px;" width="14" height="14" viewBox="0 0 14 14"><path d="M3.500 2.500 L10.500 6.500 L3.500 10.500" fill="none" stroke="#b8b8b8" stroke-width="1.500"/></svg>
<div style="left:2489px;top:666px;width:12px;height:1.4px;background:#2f7fe0;"></div>
<div style="left:2489px;top:668.8px;width:12px;height:1.4px;background:#2f7fe0;"></div>
<div style="left:2489px;top:671.6px;width:12px;height:1.4px;background:#2f7fe0;"></div>
<div style="left:2489px;top:674.4px;width:12px;height:1.4px;background:#2f7fe0;"></div>
<div style="left:2489px;top:677.2px;width:12px;height:1.4px;background:#2f7fe0;"></div>
<svg style="left:2488px;top:727px;" width="14" height="18" viewBox="0 0 14 18"><path d="M1.500 1 H12.500 L8.500 9 L12.500 17 H1.500 L5.500 9 Z" fill="#d8d8d8"/></svg>
<svg style="left:2512px;top:657px;" width="48" height="48" viewBox="0 0 48 48"><circle cx="24" cy="16.500" r="16" fill="#6c94d0"/><path d="M20 30 L28 30 L24 47 Z" fill="#6c94d0"/><ellipse cx="21" cy="20" rx="6.500" ry="4.500" fill="#f0f0f0"/><ellipse cx="30" cy="22.500" rx="4.500" ry="3" fill="#f4f4f4"/><rect x="15" y="9.500" width="13" height="2" fill="#44608c"/><circle cx="19" cy="19" r="1.300" fill="#d04050"/></svg>
<svg style="left:2512px;top:713px;" width="48" height="48" viewBox="0 0 48 48"><defs><pattern id="chk" width="3" height="3" patternUnits="userSpaceOnUse"><rect width="3" height="3" fill="#e4e4e4"/><rect width="1.500" height="1.500" fill="#707070"/><rect x="1.500" y="1.500" width="1.500" height="1.500" fill="#707070"/></pattern></defs><rect x="8.500" y="8.500" width="31" height="31" rx="4.500" fill="url(#chk)" stroke="#e8e8e8" stroke-width="1.500"/></svg>
<svg style="left:2512px;top:769px;" width="48" height="48" viewBox="0 0 48 48"><path d="M7 3 L40 0 L41 44 L5 47 Z" fill="#a8a6a0"/><path d="M5 5 L12 3 L8 47 L4 47 Z" fill="#4c4a46"/><rect x="13" y="8" width="6" height="8" fill="#7c9cc0"/><rect x="29" y="10" width="8" height="7" fill="#8aa4c4"/><rect x="27" y="22" width="9" height="7" fill="#4c4a46"/><path d="M18 17 L25 17 L27 34 L18 34 Z" fill="#b02c2c"/><circle cx="21.500" cy="14" r="2.600" fill="#e8d8c8"/><path d="M19 34 L22 34 L22 43 L19 43 Z M23 34 L26 34 L25.500 43 L23 43 Z" fill="#4c4a46"/><path d="M5 43 L41 41 L41 47 L5 47 Z" fill="#8c2048"/></svg>
<svg style="left:2512px;top:825px;" width="48" height="48" viewBox="0 0 48 48"><path d="M7 3 L40 0 L41 44 L5 47 Z" fill="#dcdad4"/><path d="M5 5 L12 3 L8 47 L4 47 Z" fill="#3a3834"/><rect x="13" y="8" width="6" height="8" fill="#7c9cc0"/><rect x="29" y="10" width="8" height="7" fill="#8aa4c4"/><rect x="27" y="22" width="9" height="7" fill="#3a3834"/><path d="M18 17 L25 17 L27 34 L18 34 Z" fill="#d8282c"/><circle cx="21.500" cy="14" r="2.600" fill="#e8d8c8"/><path d="M19 34 L22 34 L22 43 L19 43 Z M23 34 L26 34 L25.500 43 L23 43 Z" fill="#3a3834"/><path d="M5 43 L41 41 L41 47 L5 47 Z" fill="#b0205a"/></svg>
<svg style="left:2512px;top:881px;" width="48" height="48" viewBox="0 0 48 48"><rect width="48" height="48" fill="#2c2c2c"/><path d="M22 8 C25 8 26 12 24 14 L27 30 L24 44 M21 14 L19 30 L22 44" fill="none" stroke="#343434" stroke-width="1"/></svg>
<div style="left:2481px;top:1210px;width:399px;height:39px;background:#383838;"></div>
<div style="left:2489px;top:1212px;width:32px;height:30px;background:#2a2a2a;"></div>
<svg style="left:2493px;top:1215px;" width="26" height="26" viewBox="0 0 26 26"><rect x="2" y="1.500" width="13.500" height="13.500" rx="1.500" fill="none" stroke="#9e9e9e" stroke-width="1.500"/><path d="M18.500 6 V18.500 H6 M22 9.500 V22 H9.500" fill="none" stroke="#9e9e9e" stroke-width="1.500"/></svg>
<svg style="left:2631px;top:1216px;" width="24" height="24" viewBox="0 0 24 24"><rect x="1" y="2.500" width="21.500" height="19" rx="2" fill="#9e9e9e"/><circle cx="11.700" cy="12" r="5" fill="#383838"/></svg>
<svg style="left:2660px;top:1216px;" width="24" height="24" viewBox="0 0 24 24"><circle cx="11.700" cy="12" r="10.500" fill="none" stroke="#9e9e9e" stroke-width="1.500"/><path d="M5 17.500 A8.500 8.500 0 0 0 20 8 C16 8 14 10 12 13 C10 16 8 17.500 5 17.500 Z" fill="#9e9e9e"/></svg>
<svg style="left:2691px;top:1214px;" width="24" height="28" viewBox="0 0 24 28"><path d="M2 2 H20 M2 26 H20" stroke="#9e9e9e" stroke-width="1.500"/><text x="11" y="21.500" font-size="19.500" font-weight="bold" text-anchor="middle" fill="#9e9e9e" font-family="Liberation Sans,sans-serif" letter-spacing="-1.200" textLength="19" lengthAdjust="spacingAndGlyphs">FX</text></svg>
<svg style="left:2722px;top:1216px;" width="24" height="24" viewBox="0 0 24 24"><path d="M7 2 C10 1 15 1 18 3 C21 9 21.500 16 20.500 22 C15 21 8 21.500 2 23 C4 15 5 8 7 2 Z M12 1.500 C13.500 8 13.500 15 12 21.500 M4 12 C9 10.500 15 10.500 20.500 12 M5.500 6.500 C10 5.500 15 5.500 19.500 7 M2.800 17.500 C9 16 15 16 21 17" fill="none" stroke="#9e9e9e" stroke-width="1.400"/></svg>
<svg style="left:2788px;top:1214px;" width="26" height="28" viewBox="0 0 26 28"><path d="M2 4 H14 M2 4 V26 H18 V10" fill="none" stroke="#9e9e9e" stroke-width="1.500"/><path d="M5.500 14.500 H14.500 M5.500 18.500 H14.500 M5.500 22.500 H14.500" stroke="#9e9e9e" stroke-width="1.800"/><path d="M20 1 V9 M16 5 H24" stroke="#9e9e9e" stroke-width="1.500"/></svg>
<svg style="left:2818px;top:1214px;" width="22" height="28" viewBox="0 0 22 28"><rect x="1.500" y="1.500" width="16.500" height="23" rx="1.500" fill="none" stroke="#9e9e9e" stroke-width="1.500"/><rect x="5" y="5" width="3.300" height="3.300" fill="#9e9e9e"/><rect x="5" y="11.6" width="3.300" height="3.300" fill="#9e9e9e"/><rect x="5" y="18.2" width="3.300" height="3.300" fill="#9e9e9e"/><rect x="8.3" y="8.3" width="3.300" height="3.300" fill="#9e9e9e"/><rect x="8.3" y="14.9" width="3.300" height="3.300" fill="#9e9e9e"/><rect x="11.6" y="5" width="3.300" height="3.300" fill="#9e9e9e"/><rect x="11.6" y="11.6" width="3.300" height="3.300" fill="#9e9e9e"/><rect x="11.6" y="18.2" width="3.300" height="3.300" fill="#9e9e9e"/></svg>
<svg style="left:2848px;top:1214px;" width="22" height="28" viewBox="0 0 22 28"><path d="M1 5.500 H19 M6.500 5 V2 H13.500 V5 M3 5.500 V23 a2 2 0 0 0 2 2 H15 a2 2 0 0 0 2 -2 V5.500" fill="none" stroke="#9e9e9e" stroke-width="1.500"/><path d="M7 9.500 V21 M10 9.500 V21 M13 9.500 V21" stroke="#9e9e9e" stroke-width="1.500"/></svg>
<div style="left:2481px;top:1249px;width:399px;height:45px;background:#272727;"></div>
<div style="left:2481px;top:1249px;width:27px;height:45px;background:#2b2b2b;"></div>
<div style="left:2508px;top:1252px;width:87px;height:42px;background:#363636;"></div>
<div style="left:2491.3px;top:1265px;width:1.9px;height:12.5px;background:#909090;"></div>
<div style="left:2496.3px;top:1265px;width:1.9px;height:12.5px;background:#909090;"></div>
<span class="t" id="t91" style="left:2516.21px;top:1263.41px;font-size:17px;color:#f0f0f0;transform:scaleX(0.9519);">Transform</span>
<span class="t" id="t92" style="left:2602.48px;top:1263.41px;font-size:17px;color:#b8b8b8;transform:scaleX(0.9971);">Navigator</span>
<span class="t" id="t93" style="left:2689.39px;top:1263.41px;font-size:17px;color:#b8b8b8;transform:scaleX(0.9889);">History</span>
<svg style="left:2852px;top:1263.5px;" width="16" height="16" viewBox="0 0 16 16"><rect x="0" y="0" width="16" height="3" fill="#9a9a9a"/><rect x="0" y="6.300" width="16" height="3" fill="#9a9a9a"/><rect x="0" y="12.600" width="16" height="3" fill="#9a9a9a"/></svg>
<div style="left:2481px;top:1294px;width:399px;height:194px;background:#363636;"></div>
<div style="left:2510px;top:1349.5px;width:46px;height:45.5px;background:#6a6a6a;"></div>
<div style="left:2505.7px;top:1345px;width:9px;height:9px;background:#6a6a6a;"></div>
<div style="left:2505.7px;top:1367.5px;width:9px;height:9px;background:#6a6a6a;"></div>
<div style="left:2505.7px;top:1390px;width:9px;height:9px;background:#6a6a6a;"></div>
<div style="left:2528.45px;top:1345px;width:9px;height:9px;background:#6a6a6a;"></div>
<div style="left:2528.45px;top:1367.5px;width:9px;height:9px;background:#6a6a6a;"></div>
<div style="left:2528.45px;top:1390px;width:9px;height:9px;background:#6a6a6a;"></div>
<div style="left:2551.2px;top:1345px;width:9px;height:9px;background:#6a6a6a;"></div>
<div style="left:2551.2px;top:1367.5px;width:9px;height:9px;background:#6a6a6a;"></div>
<div style="left:2551.2px;top:1390px;width:9px;height:9px;background:#6a6a6a;"></div>
<div style="left:2602px;top:1312.5px;width:98px;height:29px;background:#2e2e2e;border-radius:4px;"></div>
<span class="t" id="t94" style="left:2582.45px;top:1319.26px;font-size:18px;color:#787878;transform:scaleX(0.8699);">X:</span>
<span class="t" id="t95" style="left:2610.08px;top:1319.26px;font-size:18px;color:#9a9a9a;transform:scaleX(0.9417);">0 px</span>
<div style="left:2741px;top:1312.5px;width:98px;height:29px;background:#2e2e2e;border-radius:4px;"></div>
<span class="t" id="t96" style="left:2717.36px;top:1319.26px;font-size:18px;color:#787878;transform:scaleX(0.9193);">W:</span>
<span class="t" id="t97" style="left:2749.71px;top:1319.26px;font-size:18px;color:#9a9a9a;transform:scaleX(0.9326);">0 px</span>
<div style="left:2602px;top:1348px;width:98px;height:29.5px;background:#2e2e2e;border-radius:4px;"></div>
<span class="t" id="t98" style="left:2582.55px;top:1355.26px;font-size:18px;color:#787878;transform:scaleX(0.9165);">Y:</span>
<span class="t" id="t99" style="left:2610.08px;top:1355.26px;font-size:18px;color:#9a9a9a;transform:scaleX(0.9417);">0 px</span>
<div style="left:2741px;top:1348px;width:98px;height:29.5px;background:#2e2e2e;border-radius:4px;"></div>
<span class="t" id="t100" style="left:2719.99px;top:1355.26px;font-size:18px;color:#787878;transform:scaleX(0.9818);">H:</span>
<span class="t" id="t101" style="left:2749.71px;top:1355.26px;font-size:18px;color:#9a9a9a;transform:scaleX(0.9326);">0 px</span>
<div style="left:2602px;top:1393.5px;width:98px;height:29px;background:#2e2e2e;border-radius:4px;"></div>
<span class="t" id="t102" style="left:2581.22px;top:1400.06px;font-size:18px;color:#787878;transform:scaleX(0.8589);">R:</span>
<span class="t" id="t103" style="left:2610.03px;top:1400.06px;font-size:18px;color:#9a9a9a;transform:scaleX(0.9778);">0 °</span>
<svg style="left:2681px;top:1402px;" width="16" height="12" viewBox="0 0 16 12"><path d="M3 2.800 L7.800 7.400 L12.600 2.800" fill="none" stroke="#b0b0b0" stroke-width="1.700"/></svg>
<div style="left:2741px;top:1393.5px;width:98px;height:29px;background:#2e2e2e;border-radius:4px;"></div>
<span class="t" id="t104" style="left:2723.17px;top:1400.06px;font-size:18px;color:#787878;transform:scaleX(0.8364);">S:</span>
<span class="t" id="t105" style="left:2749.65px;top:1400.06px;font-size:18px;color:#9a9a9a;transform:scaleX(0.9599);">0 °</span>
<svg style="left:2820px;top:1402px;" width="16" height="12" viewBox="0 0 16 12"><path d="M3 2.800 L7.800 7.400 L12.600 2.800" fill="none" stroke="#b0b0b0" stroke-width="1.700"/></svg>
<svg style="left:2855px;top:1328px;" width="16" height="34" viewBox="0 0 16 34"><path d="M3.500 13 V5.500 a3 3 0 0 1 3 -3 H8.500 a3 3 0 0 1 3 3 V13 M3.500 21 V27.500 a3 3 0 0 0 3 3 H8.500 a3 3 0 0 0 3 -3 V21 M0 17 H4.500 M10.500 17 H15" fill="none" stroke="#b4b4b4" stroke-width="1.500"/></svg>
<div style="left:2771px;top:1435px;width:44.5px;height:39px;background:#444444;border-radius:4px;"></div>
<div style="left:2817px;top:1435px;width:21px;height:39px;background:#444444;border-radius:4px;"></div>
<svg style="left:2780px;top:1442px;" width="28" height="26" viewBox="0 0 28 26"><path d="M2 8 V2 H8 M13 2 H17 M21 2 H25 V7 M25 11 V14 M25 18 V22 H21" fill="none" stroke="#7a7a7a" stroke-width="1.400"/><rect x="1.500" y="11.500" width="12" height="11.500" rx="2.500" fill="#787878"/></svg>
<svg style="left:2819.5px;top:1447px;" width="16" height="12" viewBox="0 0 16 12"><path d="M3 2.800 L7.800 7.400 L12.600 2.800" fill="none" stroke="#f0f0f0" stroke-width="1.700"/></svg>
</body></html>
